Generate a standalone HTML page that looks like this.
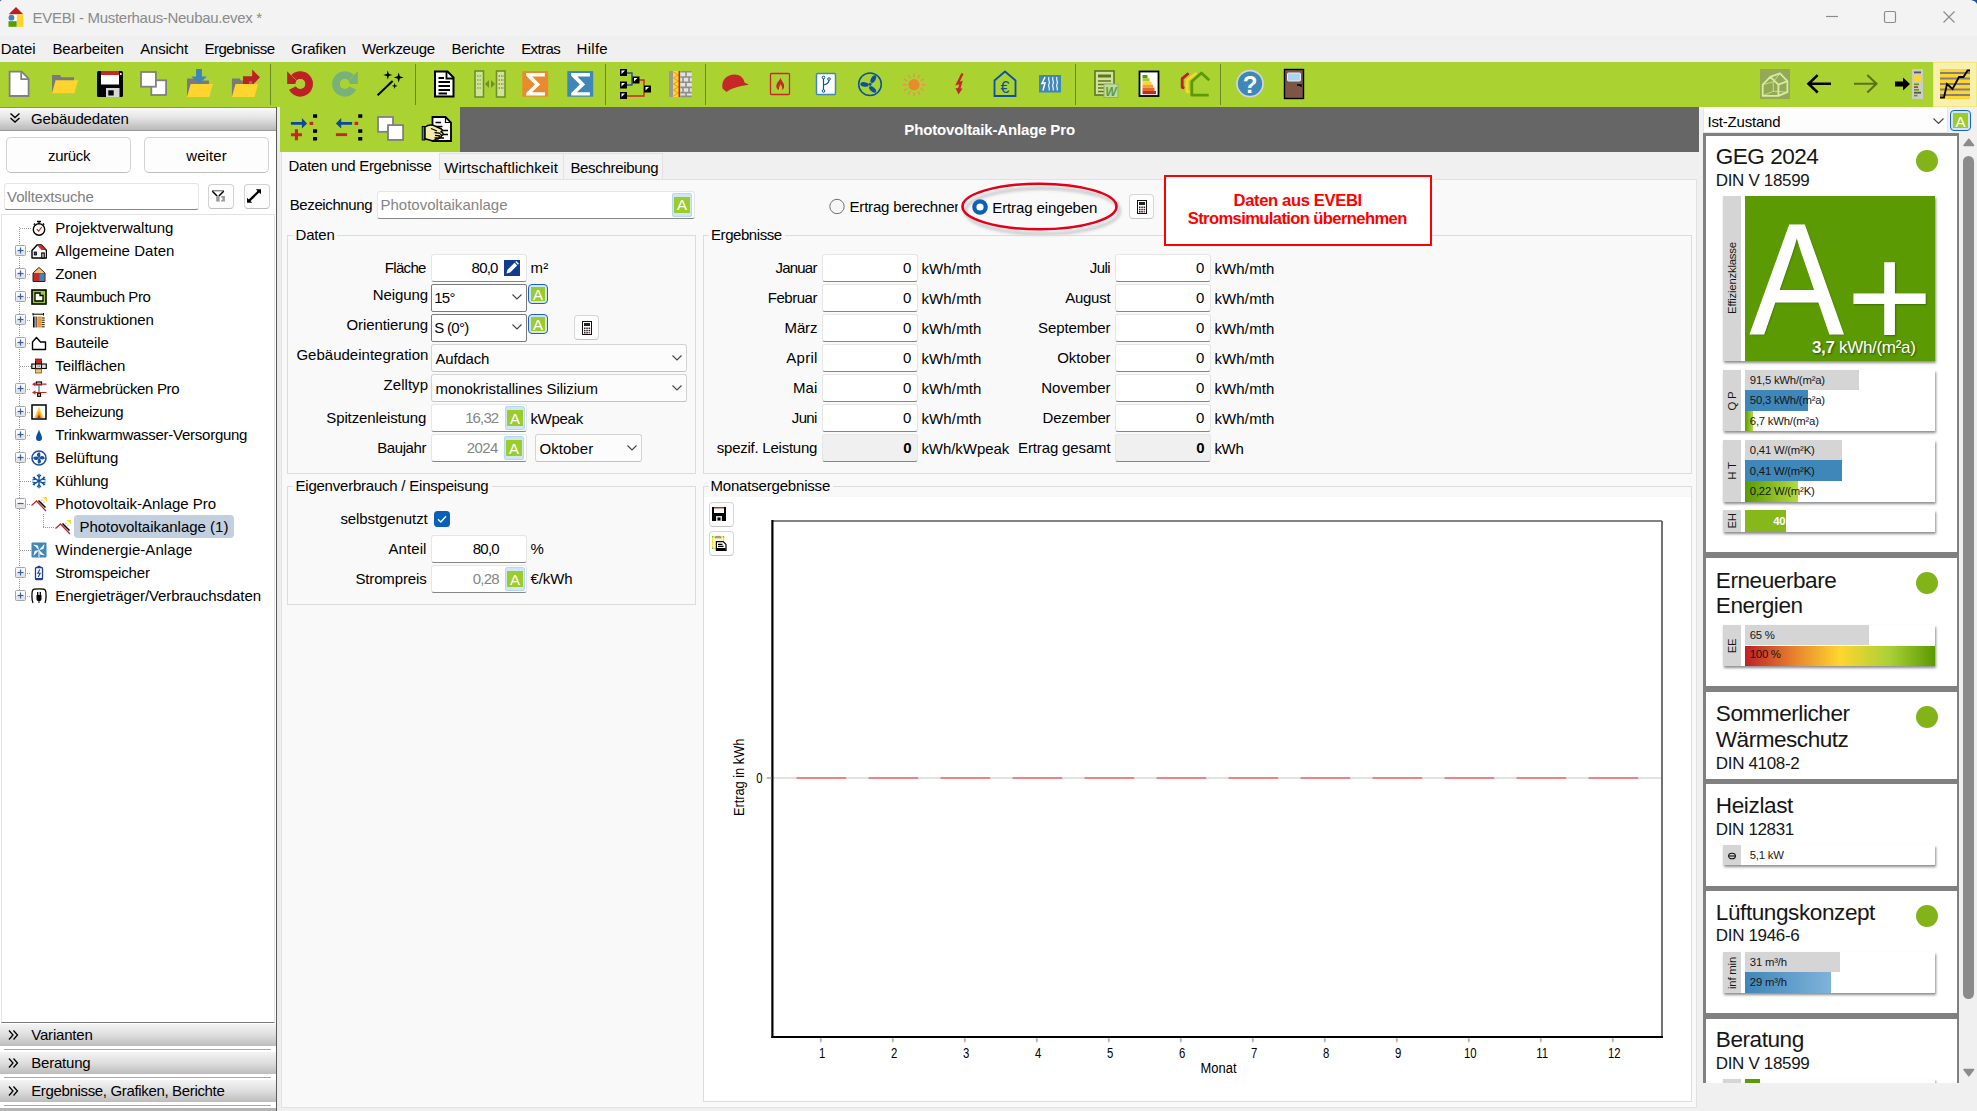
<!DOCTYPE html>
<html lang="de"><head><meta charset="utf-8"><title>EVEBI - Musterhaus-Neubau.evex *</title>
<style>
html,body{margin:0;padding:0;}
body{width:1977px;height:1111px;overflow:hidden;position:relative;background:#f0f0f0;font-family:"Liberation Sans",sans-serif;}
div,svg{position:absolute;}
.t{white-space:nowrap;line-height:normal;}
svg text{font-family:"Liberation Sans",sans-serif;}
</style></head><body>
<div style="left:0px;top:0px;width:1977px;height:36px;background:#f3f3f3;"></div>
<div style="left:0px;top:36px;width:1977px;height:26px;background:#f0f0f0;"></div>
<div class="t" style="top:9.00px;font-size:15px;color:#8a8a8a;letter-spacing:-0.312px;left:32.60px;">EVEBI - Musterhaus-Neubau.evex *</div>
<svg style="left:6px;top:5px;" width="20" height="24" viewBox="0 0 20 24">
      <rect x="2.5" y="9.4" width="8.4" height="6.8" fill="#fff"/>
      <polygon points="10,2 17.2,9.3 2.7,9.3" fill="#b82020"/>
      <circle cx="5.45" cy="12.7" r="2.9" fill="#3f86b9"/>
      <rect x="2.5" y="16.2" width="8.2" height="5.6" fill="#5b9a03"/>
      <rect x="10.9" y="9.4" width="6.5" height="12.4" fill="#ffd62c"/>
    </svg>
<svg style="left:0px;top:0px;" width="3" height="2" viewBox="0 0 3 2"><path d="M0 0 H2 Q0.5 0.3 0 1.5Z" fill="#1c4e9c"/></svg>
<svg style="left:1820px;top:5px;" width="150" height="24" viewBox="0 0 150 24">
      <line x1="6" y1="11.5" x2="18" y2="11.5" stroke="#8c8c8c" stroke-width="1.2"/>
      <rect x="64.5" y="6.5" width="11" height="11" rx="1.5" fill="none" stroke="#8c8c8c" stroke-width="1.2"/>
      <path d="M123.5 6.5 L134.5 17.5 M134.5 6.5 L123.5 17.5" stroke="#8c8c8c" stroke-width="1.2" fill="none"/>
    </svg>
<svg style="left:1969px;top:0px;" width="8" height="4" viewBox="0 0 8 4"><path d="M2 0 H8 V4 Q7 1 2 0Z" fill="#1c4e9c"/></svg>
<div class="t" style="top:40.00px;font-size:15px;color:#000;letter-spacing:-0.066px;left:0.80px;">Datei</div>
<div class="t" style="top:40.00px;font-size:15px;color:#000;letter-spacing:-0.146px;left:52.50px;">Bearbeiten</div>
<div class="t" style="top:40.00px;font-size:15px;color:#000;letter-spacing:-0.229px;left:140.30px;">Ansicht</div>
<div class="t" style="top:40.00px;font-size:15px;color:#000;letter-spacing:-0.495px;left:204.50px;">Ergebnisse</div>
<div class="t" style="top:40.00px;font-size:15px;color:#000;letter-spacing:-0.213px;left:291.00px;">Grafiken</div>
<div class="t" style="top:40.00px;font-size:15px;color:#000;letter-spacing:-0.299px;left:361.90px;">Werkzeuge</div>
<div class="t" style="top:40.00px;font-size:15px;color:#000;letter-spacing:-0.241px;left:451.50px;">Berichte</div>
<div class="t" style="top:40.00px;font-size:15px;color:#000;letter-spacing:-0.586px;left:521.20px;">Extras</div>
<div class="t" style="top:40.00px;font-size:15px;color:#000;letter-spacing:0.297px;left:576.50px;">Hilfe</div>
<div style="left:0px;top:62px;width:1977px;height:45px;background:#aad331;"></div>
<div style="left:1933px;top:62px;width:44px;height:45px;background:#f9f0ae;border:1px solid #f4e57f;box-sizing:border-box;"></div>
<div style="left:270px;top:64px;width:1px;height:41px;background:#6d8a22;"></div>
<div style="left:415px;top:64px;width:1px;height:41px;background:#6d8a22;"></div>
<div style="left:605px;top:64px;width:1px;height:41px;background:#6d8a22;"></div>
<div style="left:705px;top:64px;width:1px;height:41px;background:#6d8a22;"></div>
<div style="left:1075px;top:64px;width:1px;height:41px;background:#6d8a22;"></div>
<div style="left:1220px;top:64px;width:1px;height:41px;background:#6d8a22;"></div>
<div style="left:280px;top:107px;width:180px;height:45px;background:#aad331;"></div>
<div style="left:460px;top:107px;width:1239px;height:45px;background:#666666;"></div>
<div class="t" style="top:121.00px;font-size:15px;color:#fff;font-weight:bold;letter-spacing:-0.156px;left:989.62px;transform:translateX(-50%);">Photovoltaik-Anlage Pro</div>
<div style="left:0px;top:107px;width:276px;height:1004px;background:#fff;"></div>
<div style="left:276px;top:107px;width:1px;height:1004px;background:#5a5a5a;"></div>
<div style="left:277px;top:107px;width:3px;height:1004px;background:#ececec;"></div>
<div style="left:0px;top:107px;width:276px;height:24px;background:linear-gradient(#fafafa,#e4e4e4 45%,#b9b9b9);border-top:1px solid #8c8c8c;border-bottom:1px solid #9a9a9a;box-sizing:border-box;"></div>
<svg style="left:9px;top:112px;" width="12" height="12" viewBox="0 0 12 12"><path d="M1.5 1.5 L6 5.5 L10.5 1.5 M1.5 6 L6 10 L10.5 6" stroke="#000" stroke-width="1.4" fill="none"/></svg>
<div class="t" style="top:109.60px;font-size:15px;color:#000;letter-spacing:-0.13px;left:31.00px;">Gebäudedaten</div>
<div style="left:6px;top:137px;width:125px;height:36px;background:#fdfdfd;border:1px solid #d2d2d2;border-bottom-color:#bdbdbd;border-radius:5px;box-sizing:border-box;"></div>
<div class="t" style="top:146.50px;font-size:15px;color:#000;letter-spacing:-0.365px;left:69.12px;transform:translateX(-50%);">zurück</div>
<div style="left:144px;top:137px;width:125px;height:36px;background:#fdfdfd;border:1px solid #d2d2d2;border-bottom-color:#bdbdbd;border-radius:5px;box-sizing:border-box;"></div>
<div class="t" style="top:146.50px;font-size:15px;color:#000;letter-spacing:0.097px;left:206.55px;transform:translateX(-50%);">weiter</div>
<div style="left:4px;top:183px;width:195px;height:27px;background:#fff;border:1px solid #e6e6e6;border-bottom:1px solid #868686;border-radius:3px;box-sizing:border-box;"></div>
<div class="t" style="top:187.80px;font-size:15px;color:#808080;letter-spacing:-0.138px;left:7.10px;">Volltextsuche</div>
<div style="left:208px;top:184px;width:26px;height:25px;background:#fdfdfd;border:1px solid #d2d2d2;border-bottom-color:#bdbdbd;border-radius:4px;box-sizing:border-box;"></div>
<div style="left:244px;top:184px;width:26px;height:25px;background:#fdfdfd;border:1px solid #d2d2d2;border-bottom-color:#bdbdbd;border-radius:4px;box-sizing:border-box;"></div>
<svg style="left:208px;top:184px;" width="26" height="25" viewBox="0 0 26 25"><path d="M4 6.7 H16" stroke="#8a8a8a" stroke-width="1.4"/><path d="M4.3 7.2 L9.1 12.1 M15.7 7.2 L10.9 12.1" stroke="#000" stroke-width="1.5"/><rect x="8.2" y="12.1" width="3.4" height="5.5" fill="#9a9a9a"/><path d="M13.2 12.1 H16.9 V17.6 H13.2 V16 H14.4 V13.7 H13.2 Z" fill="#9a9a9a"/></svg>
<svg style="left:244px;top:184px;" width="26" height="25" viewBox="0 0 26 25"><path d="M4.5 17.3 L15.5 6.7" stroke="#000" stroke-width="2.3"/><path d="M11.8 5.2 H17 V10.2 Z" fill="#000"/><path d="M3 13.8 V18.8 H8.2 Z" fill="#000"/></svg>
<div style="left:1px;top:214px;width:274px;height:809px;background:#fff;border:1px solid #e3e3e3;border-bottom:1px solid #7a7a7a;box-sizing:border-box;"></div>
<div style="left:0px;top:1024px;width:276px;height:22px;background:linear-gradient(#f4f4f4,#dedede 50%,#bcbcbc);"></div>
<svg style="left:8px;top:1029px;" width="11" height="12" viewBox="0 0 11 12"><path d="M1 1.5 L5 6 L1 10.5 M5.5 1.5 L9.5 6 L5.5 10.5" stroke="#000" stroke-width="1.3" fill="none"/></svg>
<div class="t" style="top:1025.60px;font-size:15px;color:#000;letter-spacing:-0.179px;left:31.20px;">Varianten</div>
<div style="left:4px;top:1049px;width:267px;height:1px;background:#a8a8a8;"></div>
<div style="left:0px;top:1052px;width:276px;height:22px;background:linear-gradient(#f4f4f4,#dedede 50%,#bcbcbc);"></div>
<svg style="left:8px;top:1057px;" width="11" height="12" viewBox="0 0 11 12"><path d="M1 1.5 L5 6 L1 10.5 M5.5 1.5 L9.5 6 L5.5 10.5" stroke="#000" stroke-width="1.3" fill="none"/></svg>
<div class="t" style="top:1053.60px;font-size:15px;color:#000;letter-spacing:-0.199px;left:31.20px;">Beratung</div>
<div style="left:4px;top:1077px;width:267px;height:1px;background:#a8a8a8;"></div>
<div style="left:0px;top:1080px;width:276px;height:22px;background:linear-gradient(#f4f4f4,#dedede 50%,#bcbcbc);"></div>
<svg style="left:8px;top:1085px;" width="11" height="12" viewBox="0 0 11 12"><path d="M1 1.5 L5 6 L1 10.5 M5.5 1.5 L9.5 6 L5.5 10.5" stroke="#000" stroke-width="1.3" fill="none"/></svg>
<div class="t" style="top:1081.60px;font-size:15px;color:#000;letter-spacing:-0.341px;left:31.20px;">Ergebnisse, Grafiken, Berichte</div>
<div style="left:4px;top:1105px;width:267px;height:1px;background:#a8a8a8;"></div>
<div style="left:0px;top:1108px;width:276px;height:3px;background:#b4b4b4;"></div>
<div style="left:19px;top:227px;width:1px;height:369px;background-image:linear-gradient(#9a9a9a 50%,transparent 50%);background-size:1px 2px;"></div>
<div class="t" style="top:218.70px;font-size:15px;color:#000;letter-spacing:-0.073px;left:55.30px;">Projektverwaltung</div>
<div style="left:20px;top:228px;width:11px;height:1px;background-image:linear-gradient(90deg,#9a9a9a 50%,transparent 50%);background-size:2px 1px;"></div>
<div class="t" style="top:241.70px;font-size:15px;color:#000;letter-spacing:0.05px;left:55.30px;">Allgemeine Daten</div>
<div style="left:25px;top:251px;width:6px;height:1px;background-image:linear-gradient(90deg,#9a9a9a 50%,transparent 50%);background-size:2px 1px;"></div>
<svg style="left:15px;top:245px;" width="11" height="11" viewBox="0 0 11 11"><rect x="0.5" y="0.5" width="10" height="10" rx="1" fill="#fafafa" stroke="#a5a5a5"/><rect x="1" y="6" width="9" height="4" fill="#e4e4e4"/><path d="M2.5 5.5 H8.5" stroke="#3b5da5" stroke-width="1.2"/><path d="M5.5 2.5 V8.5" stroke="#3b5da5" stroke-width="1.2"/></svg>
<div class="t" style="top:264.70px;font-size:15px;color:#000;letter-spacing:-0.249px;left:55.30px;">Zonen</div>
<div style="left:25px;top:274px;width:6px;height:1px;background-image:linear-gradient(90deg,#9a9a9a 50%,transparent 50%);background-size:2px 1px;"></div>
<svg style="left:15px;top:268px;" width="11" height="11" viewBox="0 0 11 11"><rect x="0.5" y="0.5" width="10" height="10" rx="1" fill="#fafafa" stroke="#a5a5a5"/><rect x="1" y="6" width="9" height="4" fill="#e4e4e4"/><path d="M2.5 5.5 H8.5" stroke="#3b5da5" stroke-width="1.2"/><path d="M5.5 2.5 V8.5" stroke="#3b5da5" stroke-width="1.2"/></svg>
<div class="t" style="top:287.70px;font-size:15px;color:#000;letter-spacing:-0.405px;left:55.30px;">Raumbuch Pro</div>
<div style="left:25px;top:297px;width:6px;height:1px;background-image:linear-gradient(90deg,#9a9a9a 50%,transparent 50%);background-size:2px 1px;"></div>
<svg style="left:15px;top:291px;" width="11" height="11" viewBox="0 0 11 11"><rect x="0.5" y="0.5" width="10" height="10" rx="1" fill="#fafafa" stroke="#a5a5a5"/><rect x="1" y="6" width="9" height="4" fill="#e4e4e4"/><path d="M2.5 5.5 H8.5" stroke="#3b5da5" stroke-width="1.2"/><path d="M5.5 2.5 V8.5" stroke="#3b5da5" stroke-width="1.2"/></svg>
<div class="t" style="top:310.70px;font-size:15px;color:#000;letter-spacing:-0.12px;left:55.30px;">Konstruktionen</div>
<div style="left:25px;top:320px;width:6px;height:1px;background-image:linear-gradient(90deg,#9a9a9a 50%,transparent 50%);background-size:2px 1px;"></div>
<svg style="left:15px;top:314px;" width="11" height="11" viewBox="0 0 11 11"><rect x="0.5" y="0.5" width="10" height="10" rx="1" fill="#fafafa" stroke="#a5a5a5"/><rect x="1" y="6" width="9" height="4" fill="#e4e4e4"/><path d="M2.5 5.5 H8.5" stroke="#3b5da5" stroke-width="1.2"/><path d="M5.5 2.5 V8.5" stroke="#3b5da5" stroke-width="1.2"/></svg>
<div class="t" style="top:333.70px;font-size:15px;color:#000;letter-spacing:-0.102px;left:55.30px;">Bauteile</div>
<div style="left:25px;top:343px;width:6px;height:1px;background-image:linear-gradient(90deg,#9a9a9a 50%,transparent 50%);background-size:2px 1px;"></div>
<svg style="left:15px;top:337px;" width="11" height="11" viewBox="0 0 11 11"><rect x="0.5" y="0.5" width="10" height="10" rx="1" fill="#fafafa" stroke="#a5a5a5"/><rect x="1" y="6" width="9" height="4" fill="#e4e4e4"/><path d="M2.5 5.5 H8.5" stroke="#3b5da5" stroke-width="1.2"/><path d="M5.5 2.5 V8.5" stroke="#3b5da5" stroke-width="1.2"/></svg>
<div class="t" style="top:356.70px;font-size:15px;color:#000;letter-spacing:-0.072px;left:55.30px;">Teilflächen</div>
<div style="left:20px;top:366px;width:11px;height:1px;background-image:linear-gradient(90deg,#9a9a9a 50%,transparent 50%);background-size:2px 1px;"></div>
<div class="t" style="top:379.70px;font-size:15px;color:#000;letter-spacing:-0.326px;left:55.30px;">Wärmebrücken Pro</div>
<div style="left:25px;top:389px;width:6px;height:1px;background-image:linear-gradient(90deg,#9a9a9a 50%,transparent 50%);background-size:2px 1px;"></div>
<svg style="left:15px;top:383px;" width="11" height="11" viewBox="0 0 11 11"><rect x="0.5" y="0.5" width="10" height="10" rx="1" fill="#fafafa" stroke="#a5a5a5"/><rect x="1" y="6" width="9" height="4" fill="#e4e4e4"/><path d="M2.5 5.5 H8.5" stroke="#3b5da5" stroke-width="1.2"/><path d="M5.5 2.5 V8.5" stroke="#3b5da5" stroke-width="1.2"/></svg>
<div class="t" style="top:402.70px;font-size:15px;color:#000;letter-spacing:-0.334px;left:55.30px;">Beheizung</div>
<div style="left:25px;top:412px;width:6px;height:1px;background-image:linear-gradient(90deg,#9a9a9a 50%,transparent 50%);background-size:2px 1px;"></div>
<svg style="left:15px;top:406px;" width="11" height="11" viewBox="0 0 11 11"><rect x="0.5" y="0.5" width="10" height="10" rx="1" fill="#fafafa" stroke="#a5a5a5"/><rect x="1" y="6" width="9" height="4" fill="#e4e4e4"/><path d="M2.5 5.5 H8.5" stroke="#3b5da5" stroke-width="1.2"/><path d="M5.5 2.5 V8.5" stroke="#3b5da5" stroke-width="1.2"/></svg>
<div class="t" style="top:425.70px;font-size:15px;color:#000;letter-spacing:-0.26px;left:55.30px;">Trinkwarmwasser-Versorgung</div>
<div style="left:25px;top:435px;width:6px;height:1px;background-image:linear-gradient(90deg,#9a9a9a 50%,transparent 50%);background-size:2px 1px;"></div>
<svg style="left:15px;top:429px;" width="11" height="11" viewBox="0 0 11 11"><rect x="0.5" y="0.5" width="10" height="10" rx="1" fill="#fafafa" stroke="#a5a5a5"/><rect x="1" y="6" width="9" height="4" fill="#e4e4e4"/><path d="M2.5 5.5 H8.5" stroke="#3b5da5" stroke-width="1.2"/><path d="M5.5 2.5 V8.5" stroke="#3b5da5" stroke-width="1.2"/></svg>
<div class="t" style="top:448.70px;font-size:15px;color:#000;letter-spacing:-0.043px;left:55.30px;">Belüftung</div>
<div style="left:25px;top:458px;width:6px;height:1px;background-image:linear-gradient(90deg,#9a9a9a 50%,transparent 50%);background-size:2px 1px;"></div>
<svg style="left:15px;top:452px;" width="11" height="11" viewBox="0 0 11 11"><rect x="0.5" y="0.5" width="10" height="10" rx="1" fill="#fafafa" stroke="#a5a5a5"/><rect x="1" y="6" width="9" height="4" fill="#e4e4e4"/><path d="M2.5 5.5 H8.5" stroke="#3b5da5" stroke-width="1.2"/><path d="M5.5 2.5 V8.5" stroke="#3b5da5" stroke-width="1.2"/></svg>
<div class="t" style="top:471.70px;font-size:15px;color:#000;letter-spacing:-0.28px;left:55.30px;">Kühlung</div>
<div style="left:20px;top:481px;width:11px;height:1px;background-image:linear-gradient(90deg,#9a9a9a 50%,transparent 50%);background-size:2px 1px;"></div>
<div class="t" style="top:494.70px;font-size:15px;color:#000;letter-spacing:-0.002px;left:55.30px;">Photovoltaik-Anlage Pro</div>
<div style="left:25px;top:504px;width:6px;height:1px;background-image:linear-gradient(90deg,#9a9a9a 50%,transparent 50%);background-size:2px 1px;"></div>
<svg style="left:15px;top:498px;" width="11" height="11" viewBox="0 0 11 11"><rect x="0.5" y="0.5" width="10" height="10" rx="1" fill="#fafafa" stroke="#a5a5a5"/><rect x="1" y="6" width="9" height="4" fill="#e4e4e4"/><path d="M2.5 5.5 H8.5" stroke="#3b5da5" stroke-width="1.2"/></svg>
<div style="left:74px;top:515px;width:160px;height:23px;background:#c1cfdf;border-radius:4px;"></div>
<div class="t" style="top:517.70px;font-size:15px;color:#000;letter-spacing:-0.012px;left:79.40px;">Photovoltaikanlage (1)</div>
<div style="left:43px;top:514px;width:1px;height:14px;background-image:linear-gradient(#9a9a9a 50%,transparent 50%);background-size:1px 2px;"></div>
<div style="left:43px;top:527px;width:12px;height:1px;background-image:linear-gradient(90deg,#9a9a9a 50%,transparent 50%);background-size:2px 1px;"></div>
<div class="t" style="top:540.70px;font-size:15px;color:#000;letter-spacing:0.071px;left:55.30px;">Windenergie-Anlage</div>
<div style="left:20px;top:550px;width:11px;height:1px;background-image:linear-gradient(90deg,#9a9a9a 50%,transparent 50%);background-size:2px 1px;"></div>
<div class="t" style="top:563.70px;font-size:15px;color:#000;letter-spacing:-0.177px;left:55.30px;">Stromspeicher</div>
<div style="left:25px;top:573px;width:6px;height:1px;background-image:linear-gradient(90deg,#9a9a9a 50%,transparent 50%);background-size:2px 1px;"></div>
<svg style="left:15px;top:567px;" width="11" height="11" viewBox="0 0 11 11"><rect x="0.5" y="0.5" width="10" height="10" rx="1" fill="#fafafa" stroke="#a5a5a5"/><rect x="1" y="6" width="9" height="4" fill="#e4e4e4"/><path d="M2.5 5.5 H8.5" stroke="#3b5da5" stroke-width="1.2"/><path d="M5.5 2.5 V8.5" stroke="#3b5da5" stroke-width="1.2"/></svg>
<div class="t" style="top:586.70px;font-size:15px;color:#000;letter-spacing:-0.099px;left:55.30px;">Energieträger/Verbrauchsdaten</div>
<div style="left:25px;top:596px;width:6px;height:1px;background-image:linear-gradient(90deg,#9a9a9a 50%,transparent 50%);background-size:2px 1px;"></div>
<svg style="left:15px;top:590px;" width="11" height="11" viewBox="0 0 11 11"><rect x="0.5" y="0.5" width="10" height="10" rx="1" fill="#fafafa" stroke="#a5a5a5"/><rect x="1" y="6" width="9" height="4" fill="#e4e4e4"/><path d="M2.5 5.5 H8.5" stroke="#3b5da5" stroke-width="1.2"/><path d="M5.5 2.5 V8.5" stroke="#3b5da5" stroke-width="1.2"/></svg>
<svg style="left:31px;top:220px;" width="16" height="16" viewBox="0 0 16 16"><circle cx="8" cy="9.5" r="5.7" fill="#fff" stroke="#000" stroke-width="1.4"/><path d="M6 1.5 H10 M8 1.5 V3.5 M12 3.5 L13.2 4.7 M4 3.5 L2.8 4.7" stroke="#000" stroke-width="1.3"/><path d="M5.8 9.2 L7.6 11 L10.8 7" stroke="#c62828" stroke-width="1.2" fill="none"/></svg>
<svg style="left:31px;top:243px;" width="16" height="16" viewBox="0 0 16 16"><path d="M1 15 V7.5 L6 2 H10.5 L15.5 7.5 V15 Z" fill="#fff" stroke="#000" stroke-width="1.4" stroke-linejoin="round"/><path d="M6 2 H10.5 L15 7 H10.5 Z" fill="#d8232a"/><rect x="3.2" y="9" width="2.2" height="3" fill="#1f4fa8" stroke="#000" stroke-width="0.8"/><rect x="10.8" y="10" width="2.4" height="5" fill="#fff" stroke="#000" stroke-width="1.2"/></svg>
<svg style="left:31px;top:266px;" width="16" height="16" viewBox="0 0 16 16"><path d="M2 15.5 V7 L8 1.5 L14 7 V15.5 Z" fill="#c62828" stroke="#222" stroke-width="1"/><path d="M2.5 7 L8 2 L13.5 7 Z" fill="#f2c078"/><rect x="8.5" y="7.5" width="5" height="7.5" fill="#3f86b9"/></svg>
<svg style="left:31px;top:289px;" width="16" height="16" viewBox="0 0 16 16"><rect x="1" y="1" width="14" height="14" fill="#9ccb2c" stroke="#000" stroke-width="1.6"/><path d="M4 4 H9 V6.5 H12 V12 H4 Z" fill="#fff" stroke="#000" stroke-width="1.3"/></svg>
<svg style="left:31px;top:312px;" width="16" height="16" viewBox="0 0 16 16"><path d="M2 1 V3.5 M12.5 1 V3.5 M2 2.2 H12.5" stroke="#000" stroke-width="1"/><rect x="2" y="4.5" width="1.6" height="11" fill="#000"/><rect x="4.6" y="4.5" width="1" height="11" fill="#000"/><rect x="6.2" y="4.5" width="4.5" height="11" fill="#f0973a"/><rect x="10.7" y="4.5" width="3" height="11" fill="#fff3b8"/><path d="M10.7 6 H13.7 M10.7 8.2 H13.7 M10.7 10.4 H13.7 M10.7 12.6 H13.7 M10.7 14.8 H13.7" stroke="#000" stroke-width="0.9"/></svg>
<svg style="left:31px;top:335px;" width="16" height="16" viewBox="0 0 16 16"><path d="M1.5 14.5 V7 L5.5 2.5 L9.5 7 H14.5 V14.5 Z" fill="#fff" stroke="#000" stroke-width="1.4" stroke-linejoin="round"/></svg>
<svg style="left:31px;top:358px;" width="16" height="16" viewBox="0 0 16 16"><rect x="4.5" y="1" width="6" height="4.5" fill="#c62828" stroke="#7a1010" stroke-width="0.8"/><rect x="0.8" y="6" width="14.5" height="4.5" fill="#ddd" stroke="#000" stroke-width="1.1"/><path d="M4.5 6 V10.5 M10.5 6 V10.5 M4.5 3 V6 M10.5 3 V6" stroke="#000" stroke-width="1"/><rect x="4.5" y="11" width="6" height="4" fill="#f2c078" stroke="#7a5a10" stroke-width="0.8"/><path d="M6.5 8.2 H9" stroke="#3f86b9" stroke-width="1.2" stroke-dasharray="1 0.7"/></svg>
<svg style="left:31px;top:381px;" width="16" height="16" viewBox="0 0 16 16"><rect x="5.5" y="1" width="5" height="2.8" fill="#fff" stroke="#000" stroke-width="1.2"/><rect x="6.7" y="12.5" width="2.8" height="2.8" fill="#fff3b8" stroke="#000" stroke-width="1.2"/><path d="M8 3.8 V12.5" stroke="#3f86b9" stroke-width="1.4"/><path d="M4 3.2 H15.5 M4 11.5 H15.5" stroke="#c62828" stroke-width="1.2"/><path d="M1 3.2 L4.5 1 V5.4 Z M1 11.5 L4.5 9.3 V13.7 Z" fill="#c62828"/></svg>
<svg style="left:31px;top:404px;" width="16" height="16" viewBox="0 0 16 16"><rect x="1" y="1" width="14" height="14" fill="#fff" stroke="#000" stroke-width="1.5"/><path d="M8 3 L13 14 H3 Z" fill="#ffd42e"/><path d="M8 7 L11.2 14 H4.8 Z" fill="#f0973a"/><path d="M8 10.5 L9.8 14 H6.2 Z" fill="#c62828"/></svg>
<svg style="left:31px;top:427px;" width="16" height="16" viewBox="0 0 16 16"><path d="M8 2.5 C9 6 11 8 11 11 A3 3 0 0 1 5 11 C5 8 7 6 8 2.5 Z" fill="#0c50a5"/></svg>
<svg style="left:31px;top:450px;" width="16" height="16" viewBox="0 0 16 16"><circle cx="8" cy="8" r="7" fill="#fff" stroke="#1c4fa0" stroke-width="1.6"/><g fill="#1c4fa0"><path d="M8 8 C5 6 5.5 2.5 8.5 2.2 C10 4 9.5 6.5 8 8Z"/><path d="M8 8 C10 5 13.5 5.5 13.8 8.5 C12 10 9.5 9.5 8 8Z"/><path d="M8 8 C11 10 10.5 13.5 7.5 13.8 C6 12 6.5 9.5 8 8Z"/><path d="M8 8 C6 11 2.5 10.5 2.2 7.5 C4 6 6.5 6.5 8 8Z"/></g></svg>
<svg style="left:31px;top:473px;" width="16" height="16" viewBox="0 0 16 16"><path d="M8 0.8 V15.2 M1.8 4.4 L14.2 11.6 M14.2 4.4 L1.8 11.6" stroke="#0c50a5" stroke-width="1.3"/><path d="M6 2 L8 4 L10 2 M6 14 L8 12 L10 14 M1.3 7 L4 6.3 L3.2 3.6 M14.7 7 L12 6.3 L12.8 3.6 M1.3 9 L4 9.7 L3.2 12.4 M14.7 9 L12 9.7 L12.8 12.4" stroke="#0c50a5" stroke-width="1.1" fill="none"/></svg>
<svg style="left:31px;top:496px;" width="16" height="16" viewBox="0 0 16 16"><path d="M0.5 9.5 L5.5 5 L15 15" stroke="#c62828" stroke-width="1.3" fill="none"/><path d="M7.5 4.5 L14.5 11.5" stroke="#000" stroke-width="1.5"/><path d="M11.5 1 H16 V5.5 Z" fill="#ffd42e"/><path d="M11.5 3.5 L10 5 M13.5 5.5 L12.5 7" stroke="#ffd42e" stroke-width="1.2"/></svg>
<svg style="left:55px;top:519px;" width="16" height="16" viewBox="0 0 16 16"><path d="M0.5 9.5 L5.5 5 L15 15" stroke="#c62828" stroke-width="1.3" fill="none"/><path d="M7.5 4.5 L14.5 11.5" stroke="#000" stroke-width="1.5"/><path d="M11.5 1 H16 V5.5 Z" fill="#ffd42e"/><path d="M11.5 3.5 L10 5 M13.5 5.5 L12.5 7" stroke="#ffd42e" stroke-width="1.2"/></svg>
<svg style="left:31px;top:542px;" width="16" height="16" viewBox="0 0 16 16"><rect x="0.5" y="0.5" width="15" height="15" rx="1" fill="#3f86b9"/><g fill="#fff"><path d="M8 8 L2 2.5 L7 3.5 Z"/><path d="M8 8 L13.5 2 L12.5 7 Z"/><path d="M8 8 L14 13.5 L9 12.5 Z"/><path d="M8 8 L2.5 14 L3.5 9 Z"/></g><path d="M8 8 V15" stroke="#fff" stroke-width="1"/></svg>
<svg style="left:31px;top:565px;" width="16" height="16" viewBox="0 0 16 16"><rect x="4.5" y="2.5" width="7" height="12" rx="1" fill="#fff" stroke="#1f3fa0" stroke-width="1.3"/><rect x="6.5" y="0.8" width="3" height="1.7" fill="#1f3fa0"/><rect x="4.5" y="13" width="7" height="2" fill="#1f3fa0"/><path d="M8.8 4.5 L6.8 8.3 H9.2 L7.2 12" stroke="#1f3fa0" stroke-width="1.1" fill="none"/></svg>
<svg style="left:31px;top:588px;" width="16" height="16" viewBox="0 0 16 16"><path d="M2 15 C0.5 12 0.8 4 1.5 2.5 C2 1 3 0.8 8 0.8 C13 0.8 14 1 14.5 2.5 C15.2 4 15.5 12 14 15" fill="#fff" stroke="#000" stroke-width="1.3"/><path d="M5.5 7 H10.5 V11 C10.5 12.5 9.5 13 8.5 13 V15 H7.5 V13 C6.5 13 5.5 12.5 5.5 11 Z" fill="#000"/><path d="M6.7 4 V7 M9.3 4 V7" stroke="#000" stroke-width="1.3"/></svg>
<div style="left:280px;top:152px;width:1419px;height:959px;background:#f0f0f0;"></div>
<div style="left:281px;top:179px;width:1416px;height:929px;background:#f9f9f9;border:1px solid #e2e2e2;box-sizing:border-box;"></div>
<div style="left:281px;top:152px;width:158px;height:28px;background:#f9f9f9;border-left:1px solid #e2e2e2;"></div>
<div class="t" style="top:156.50px;font-size:15px;color:#000;letter-spacing:-0.272px;left:288.50px;">Daten und Ergebnisse</div>
<div style="left:439px;top:153px;width:125px;height:27px;background:#f3f3f3;border:1px solid #e2e2e2;box-sizing:border-box;"></div>
<div class="t" style="top:158.50px;font-size:15px;color:#000;letter-spacing:0.065px;left:444.20px;">Wirtschaftlichkeit</div>
<div style="left:563px;top:153px;width:100px;height:27px;background:#f3f3f3;border:1px solid #e2e2e2;box-sizing:border-box;"></div>
<div class="t" style="top:158.50px;font-size:15px;color:#000;letter-spacing:-0.311px;left:570.40px;">Beschreibung</div>
<div class="t" style="top:196.00px;font-size:15px;color:#000;letter-spacing:-0.385px;left:289.70px;">Bezeichnung</div>
<div style="left:377px;top:191px;width:318px;height:27.5px;background:#fff;border:1px solid #e6e6e6;border-bottom:1px solid #868686;border-radius:3px;box-sizing:border-box;"></div>
<div class="t" style="top:196.00px;font-size:15px;color:#858585;letter-spacing:0.024px;left:380.40px;">Photovoltaikanlage</div>
<div style="left:672px;top:193px;width:20px;height:23.5px;background:#cfe6f7;border:1px solid #b5d8f3;border-radius:2px;box-sizing:border-box;"></div>
<div style="left:674px;top:197px;width:16px;height:15.5px;background:#9ccb2c;"></div>
<div class="t" style="top:196.25px;font-size:15px;color:#fff;left:682.00px;transform:translateX(-50%);">A</div>
<div style="left:287px;top:235px;width:409px;height:239px;border:1px solid #dcdcdc;box-sizing:border-box;"></div>
<div style="left:293px;top:227px;width:44px;height:16px;background:#f9f9f9;"></div>
<div class="t" style="top:225.60px;font-size:15px;color:#000;letter-spacing:-0.166px;left:295.50px;">Daten</div>
<div class="t" style="top:258.50px;font-size:15px;color:#000;letter-spacing:-0.672px;right:1551.27px;">Fläche</div>
<div style="left:431px;top:254px;width:96px;height:28px;background:#fff;border:1px solid #e6e6e6;border-bottom:1px solid #868686;border-radius:3px;box-sizing:border-box;"></div>
<div class="t" style="top:258.50px;font-size:15px;color:#000;letter-spacing:-0.801px;right:1479.40px;">80,0</div>
<svg style="left:504px;top:260px;" width="16" height="16" viewBox="0 0 16 16"><rect width="16" height="16" fill="#0f3c91"/><path d="M2.5 13.5 L3.5 9.8 L10.5 2.8 L13.2 5.5 L6.2 12.5 Z" fill="#fff"/><path d="M11.3 2 L12.3 1 L15 3.7 L14 4.7Z" fill="#fff"/></svg>
<div class="t" style="top:259.00px;font-size:15px;color:#000;letter-spacing:0.25px;left:530.50px;">m²</div>
<div class="t" style="top:286.00px;font-size:15px;color:#000;letter-spacing:-0.099px;right:1549.10px;">Neigung</div>
<div style="left:431px;top:284px;width:95.5px;height:27.5px;background:#fff;border:1px solid #7a7a7a;border-radius:2px;box-sizing:border-box;"></div>
<div class="t" style="top:289.00px;font-size:15px;color:#000;letter-spacing:-0.663px;left:434.20px;">15°</div>
<svg style="left:510.5px;top:293px;" width="12" height="8" viewBox="0 0 12 8"><path d="M1.5 1.5 L6 6 L10.5 1.5" stroke="#444" stroke-width="1.1" fill="none"/></svg>
<div style="left:528px;top:284px;width:20px;height:20px;background:#cfe6f7;border:1.5px solid #1e62b4;border-radius:4px;box-sizing:border-box;"></div>
<div style="left:531px;top:287px;width:14px;height:14px;background:#9ccb2c;"></div>
<div class="t" style="top:286.30px;font-size:15px;color:#fff;left:538.00px;transform:translateX(-50%);">A</div>
<div class="t" style="top:316.00px;font-size:15px;color:#000;letter-spacing:-0.087px;right:1549.09px;">Orientierung</div>
<div style="left:431px;top:314px;width:95.5px;height:27.5px;background:#fff;border:1px solid #7a7a7a;border-radius:2px;box-sizing:border-box;"></div>
<div class="t" style="top:319.00px;font-size:15px;color:#000;letter-spacing:-0.669px;left:434.20px;">S (0°)</div>
<svg style="left:510.5px;top:323px;" width="12" height="8" viewBox="0 0 12 8"><path d="M1.5 1.5 L6 6 L10.5 1.5" stroke="#444" stroke-width="1.1" fill="none"/></svg>
<div style="left:528px;top:314px;width:20px;height:20px;background:#cfe6f7;border:1.5px solid #1e62b4;border-radius:4px;box-sizing:border-box;"></div>
<div style="left:531px;top:317px;width:14px;height:14px;background:#9ccb2c;"></div>
<div class="t" style="top:316.30px;font-size:15px;color:#fff;left:538.00px;transform:translateX(-50%);">A</div>
<div style="left:574px;top:315px;width:25px;height:25px;background:#fdfdfd;border:1px solid #d6d6d6;border-bottom-color:#c4c4c4;border-radius:4px;box-sizing:border-box;"></div>
<svg style="left:582px;top:321px;" width="10" height="14" viewBox="0 0 10 14"><rect x="0.5" y="0.5" width="9" height="13" fill="#fff" stroke="#111"/>
      <rect x="2" y="2" width="6" height="3" fill="#222"/>
      <g fill="#222"><rect x="2" y="6.5" width="1.5" height="1.5"/><rect x="4.3" y="6.5" width="1.5" height="1.5"/><rect x="6.6" y="6.5" width="1.5" height="1.5"/>
      <rect x="2" y="8.8" width="1.5" height="1.5"/><rect x="4.3" y="8.8" width="1.5" height="1.5"/><rect x="6.6" y="8.8" width="1.5" height="1.5"/>
      <rect x="2" y="11" width="1.5" height="1.5"/><rect x="4.3" y="11" width="1.5" height="1.5"/></g><rect x="6.6" y="11" width="1.5" height="1.5" fill="#d22"/></svg>
<div class="t" style="top:345.50px;font-size:15px;color:#000;letter-spacing:0.012px;right:1548.59px;">Gebäudeintegration</div>
<div style="left:431px;top:344px;width:255.5px;height:28px;background:#fcfcfc;border:1px solid #d4d4d4;border-bottom-color:#c2c2c2;border-radius:3px;box-sizing:border-box;"></div>
<div class="t" style="top:349.70px;font-size:15px;color:#000;letter-spacing:-0.192px;left:435.50px;">Aufdach</div>
<svg style="left:670.5px;top:354px;" width="12" height="8" viewBox="0 0 12 8"><path d="M1.5 1.5 L6 6 L10.5 1.5" stroke="#444" stroke-width="1.1" fill="none"/></svg>
<div class="t" style="top:375.50px;font-size:15px;color:#000;letter-spacing:0.045px;right:1548.95px;">Zelltyp</div>
<div style="left:431px;top:374px;width:255.5px;height:28px;background:#fcfcfc;border:1px solid #d4d4d4;border-bottom-color:#c2c2c2;border-radius:3px;box-sizing:border-box;"></div>
<div class="t" style="top:379.70px;font-size:15px;color:#000;letter-spacing:-0.04px;left:435.50px;">monokristallines Silizium</div>
<svg style="left:670.5px;top:384px;" width="12" height="8" viewBox="0 0 12 8"><path d="M1.5 1.5 L6 6 L10.5 1.5" stroke="#444" stroke-width="1.1" fill="none"/></svg>
<div class="t" style="top:409.00px;font-size:15px;color:#000;letter-spacing:-0.116px;right:1550.72px;">Spitzenleistung</div>
<div style="left:431px;top:404px;width:96px;height:28px;background:#fff;border:1px solid #e6e6e6;border-bottom:1px solid #868686;border-radius:3px;box-sizing:border-box;"></div>
<div class="t" style="top:409.00px;font-size:15px;color:#858585;letter-spacing:-0.869px;right:1478.67px;">16,32</div>
<div style="left:505px;top:406px;width:20px;height:24px;background:#cfe6f7;border:1px solid #b5d8f3;border-radius:2px;box-sizing:border-box;"></div>
<div style="left:507px;top:410px;width:16px;height:16px;background:#9ccb2c;"></div>
<div class="t" style="top:409.50px;font-size:15px;color:#fff;left:515.00px;transform:translateX(-50%);">A</div>
<div class="t" style="top:409.50px;font-size:15px;color:#000;letter-spacing:-0.281px;left:530.40px;">kWpeak</div>
<div class="t" style="top:439.00px;font-size:15px;color:#000;letter-spacing:-0.429px;right:1551.03px;">Baujahr</div>
<div style="left:431px;top:434px;width:96px;height:28px;background:#fff;border:1px solid #e6e6e6;border-bottom:1px solid #868686;border-radius:3px;box-sizing:border-box;"></div>
<div class="t" style="top:439.00px;font-size:15px;color:#858585;letter-spacing:-0.594px;right:1479.19px;">2024</div>
<div style="left:504px;top:436px;width:20px;height:24px;background:#cfe6f7;border:1px solid #b5d8f3;border-radius:2px;box-sizing:border-box;"></div>
<div style="left:506px;top:440px;width:16px;height:16px;background:#9ccb2c;"></div>
<div class="t" style="top:439.50px;font-size:15px;color:#fff;left:514.00px;transform:translateX(-50%);">A</div>
<div style="left:535px;top:434px;width:106.5px;height:28px;background:#fcfcfc;border:1px solid #d4d4d4;border-bottom-color:#c2c2c2;border-radius:3px;box-sizing:border-box;"></div>
<div class="t" style="top:439.70px;font-size:15px;color:#000;letter-spacing:0.049px;left:539.50px;">Oktober</div>
<svg style="left:625.5px;top:444px;" width="12" height="8" viewBox="0 0 12 8"><path d="M1.5 1.5 L6 6 L10.5 1.5" stroke="#444" stroke-width="1.1" fill="none"/></svg>
<div style="left:287px;top:485.5px;width:409px;height:119px;border:1px solid #dcdcdc;box-sizing:border-box;"></div>
<div style="left:293px;top:477.5px;width:199px;height:16px;background:#f9f9f9;"></div>
<div class="t" style="top:476.50px;font-size:15px;color:#000;letter-spacing:-0.225px;left:295.50px;">Eigenverbrauch / Einspeisung</div>
<div class="t" style="top:510.30px;font-size:15px;color:#000;letter-spacing:-0.092px;right:1549.39px;">selbstgenutzt</div>
<div style="left:434px;top:511px;width:16px;height:16px;background:#0a5fb9;border-radius:3.5px;"></div>
<svg style="left:434px;top:511px;" width="16" height="16" viewBox="0 0 16 16"><path d="M4 8.3 L6.8 11 L12 5.3" stroke="#fff" stroke-width="1.3" fill="none"/></svg>
<div class="t" style="top:539.80px;font-size:15px;color:#000;letter-spacing:0.078px;right:1550.52px;">Anteil</div>
<div style="left:431px;top:535px;width:96px;height:28px;background:#fff;border:1px solid #e6e6e6;border-bottom:1px solid #868686;border-radius:3px;box-sizing:border-box;"></div>
<div class="t" style="top:539.80px;font-size:15px;color:#000;letter-spacing:-0.751px;right:1478.05px;">80,0</div>
<div class="t" style="top:540.30px;font-size:15px;color:#000;letter-spacing:-2.144px;left:530.40px;">%</div>
<div class="t" style="top:569.80px;font-size:15px;color:#000;letter-spacing:-0.133px;right:1550.43px;">Strompreis</div>
<div style="left:431px;top:565px;width:96px;height:28px;background:#fff;border:1px solid #e6e6e6;border-bottom:1px solid #868686;border-radius:3px;box-sizing:border-box;"></div>
<div class="t" style="top:569.80px;font-size:15px;color:#858585;letter-spacing:-0.751px;right:1478.05px;">0,28</div>
<div style="left:505px;top:567px;width:20px;height:24px;background:#cfe6f7;border:1px solid #b5d8f3;border-radius:2px;box-sizing:border-box;"></div>
<div style="left:507px;top:571px;width:16px;height:16px;background:#9ccb2c;"></div>
<div class="t" style="top:570.50px;font-size:15px;color:#fff;left:515.00px;transform:translateX(-50%);">A</div>
<div class="t" style="top:570.30px;font-size:15px;color:#000;letter-spacing:-0.063px;left:530.40px;">€/kWh</div>
<svg style="left:828px;top:198px;" width="18" height="18" viewBox="0 0 18 18"><circle cx="9" cy="8.5" r="7.2" fill="#f6f6f6" stroke="#6f6f6f" stroke-width="1"/></svg>
<div class="t" style="left:849.5px;top:198px;width:108.5px;overflow:hidden;font-size:15px;letter-spacing:-0.182px;">Ertrag berechnen</div>
<svg style="left:971px;top:198px;" width="18" height="18" viewBox="0 0 18 18"><circle cx="9" cy="9" r="7.8" fill="#0a5fb9"/><circle cx="9" cy="9" r="3.6" fill="#fff"/></svg>
<div class="t" style="top:199.00px;font-size:15px;color:#000;letter-spacing:-0.117px;left:992.30px;">Ertrag eingeben</div>
<svg style="left:951px;top:175px;" width="180" height="66" viewBox="0 0 180 66"><ellipse cx="90" cy="33.5" rx="77" ry="22.8" fill="none" stroke="#8a8a8a" stroke-opacity="0.45" stroke-width="3" transform="translate(1.5,2.5)" style="filter:blur(1.5px)"/><ellipse cx="88.5" cy="31.5" rx="77" ry="22.8" fill="none" stroke="#e3001b" stroke-width="2.6"/></svg>
<div style="left:1129px;top:194px;width:25px;height:25px;background:#fdfdfd;border:1px solid #d6d6d6;border-bottom-color:#c4c4c4;border-radius:4px;box-sizing:border-box;"></div>
<svg style="left:1137px;top:200px;" width="10" height="14" viewBox="0 0 10 14"><rect x="0.5" y="0.5" width="9" height="13" fill="#fff" stroke="#111"/>
      <rect x="2" y="2" width="6" height="3" fill="#222"/>
      <g fill="#222"><rect x="2" y="6.5" width="1.5" height="1.5"/><rect x="4.3" y="6.5" width="1.5" height="1.5"/><rect x="6.6" y="6.5" width="1.5" height="1.5"/>
      <rect x="2" y="8.8" width="1.5" height="1.5"/><rect x="4.3" y="8.8" width="1.5" height="1.5"/><rect x="6.6" y="8.8" width="1.5" height="1.5"/>
      <rect x="2" y="11" width="1.5" height="1.5"/><rect x="4.3" y="11" width="1.5" height="1.5"/></g><rect x="6.6" y="11" width="1.5" height="1.5" fill="#d22"/></svg>
<div style="left:1164.3px;top:174.5px;width:267.7px;height:71px;background:#fff;border:2.2px solid #ff0000;box-sizing:border-box;"></div>
<div class="t" style="top:190.80px;font-size:16.6px;color:#ff0000;font-weight:bold;letter-spacing:-0.368px;left:1297.72px;transform:translateX(-50%);">Daten aus EVEBI</div>
<div class="t" style="top:208.80px;font-size:16.6px;color:#ff0000;font-weight:bold;letter-spacing:-0.62px;left:1297.19px;transform:translateX(-50%);">Stromsimulation übernehmen</div>
<div style="left:702.5px;top:234.5px;width:989.5px;height:239px;border:1px solid #dcdcdc;box-sizing:border-box;"></div>
<div style="left:708.5px;top:226.5px;width:76px;height:16px;background:#f9f9f9;"></div>
<div class="t" style="top:226.00px;font-size:15px;color:#000;letter-spacing:-0.435px;left:711.00px;">Ergebnisse</div>
<div style="left:1164.3px;top:174.5px;width:267.7px;height:71px;background:#fff;border:2.2px solid #ff0000;box-sizing:border-box;"></div>
<div class="t" style="top:190.80px;font-size:16.6px;color:#ff0000;font-weight:bold;letter-spacing:-0.368px;left:1297.72px;transform:translateX(-50%);">Daten aus EVEBI</div>
<div class="t" style="top:208.80px;font-size:16.6px;color:#ff0000;font-weight:bold;letter-spacing:-0.62px;left:1297.19px;transform:translateX(-50%);">Stromsimulation übernehmen</div>
<div class="t" style="top:259.00px;font-size:15px;color:#000;letter-spacing:-0.779px;right:1160.38px;">Januar</div>
<div style="left:822px;top:254px;width:96px;height:28px;background:#fff;border:1px solid #e6e6e6;border-bottom:1px solid #868686;border-radius:3px;box-sizing:border-box;"></div>
<div class="t" style="top:259.00px;font-size:15px;color:#000;right:1065.70px;">0</div>
<div class="t" style="top:259.50px;font-size:15px;color:#000;letter-spacing:0.145px;left:921.40px;">kWh/mth</div>
<div class="t" style="top:259.00px;font-size:15px;color:#000;letter-spacing:-0.579px;right:866.98px;">Juli</div>
<div style="left:1115px;top:254px;width:96px;height:28px;background:#fff;border:1px solid #e6e6e6;border-bottom:1px solid #868686;border-radius:3px;box-sizing:border-box;"></div>
<div class="t" style="top:259.00px;font-size:15px;color:#000;right:772.70px;">0</div>
<div class="t" style="top:259.50px;font-size:15px;color:#000;letter-spacing:0.145px;left:1214.40px;">kWh/mth</div>
<div class="t" style="top:289.00px;font-size:15px;color:#000;letter-spacing:-0.476px;right:1160.08px;">Februar</div>
<div style="left:822px;top:284px;width:96px;height:28px;background:#fff;border:1px solid #e6e6e6;border-bottom:1px solid #868686;border-radius:3px;box-sizing:border-box;"></div>
<div class="t" style="top:289.00px;font-size:15px;color:#000;right:1065.70px;">0</div>
<div class="t" style="top:289.50px;font-size:15px;color:#000;letter-spacing:0.145px;left:921.40px;">kWh/mth</div>
<div class="t" style="top:289.00px;font-size:15px;color:#000;letter-spacing:-0.251px;right:866.65px;">August</div>
<div style="left:1115px;top:284px;width:96px;height:28px;background:#fff;border:1px solid #e6e6e6;border-bottom:1px solid #868686;border-radius:3px;box-sizing:border-box;"></div>
<div class="t" style="top:289.00px;font-size:15px;color:#000;right:772.70px;">0</div>
<div class="t" style="top:289.50px;font-size:15px;color:#000;letter-spacing:0.145px;left:1214.40px;">kWh/mth</div>
<div class="t" style="top:319.00px;font-size:15px;color:#000;letter-spacing:-0.161px;right:1159.76px;">März</div>
<div style="left:822px;top:314px;width:96px;height:28px;background:#fff;border:1px solid #e6e6e6;border-bottom:1px solid #868686;border-radius:3px;box-sizing:border-box;"></div>
<div class="t" style="top:319.00px;font-size:15px;color:#000;right:1065.70px;">0</div>
<div class="t" style="top:319.50px;font-size:15px;color:#000;letter-spacing:0.145px;left:921.40px;">kWh/mth</div>
<div class="t" style="top:319.00px;font-size:15px;color:#000;letter-spacing:-0.097px;right:866.50px;">September</div>
<div style="left:1115px;top:314px;width:96px;height:28px;background:#fff;border:1px solid #e6e6e6;border-bottom:1px solid #868686;border-radius:3px;box-sizing:border-box;"></div>
<div class="t" style="top:319.00px;font-size:15px;color:#000;right:772.70px;">0</div>
<div class="t" style="top:319.50px;font-size:15px;color:#000;letter-spacing:0.145px;left:1214.40px;">kWh/mth</div>
<div class="t" style="top:349.00px;font-size:15px;color:#000;letter-spacing:0.297px;right:1159.30px;">April</div>
<div style="left:822px;top:344px;width:96px;height:28px;background:#fff;border:1px solid #e6e6e6;border-bottom:1px solid #868686;border-radius:3px;box-sizing:border-box;"></div>
<div class="t" style="top:349.00px;font-size:15px;color:#000;right:1065.70px;">0</div>
<div class="t" style="top:349.50px;font-size:15px;color:#000;letter-spacing:0.145px;left:921.40px;">kWh/mth</div>
<div class="t" style="top:349.00px;font-size:15px;color:#000;letter-spacing:0.02px;right:866.38px;">Oktober</div>
<div style="left:1115px;top:344px;width:96px;height:28px;background:#fff;border:1px solid #e6e6e6;border-bottom:1px solid #868686;border-radius:3px;box-sizing:border-box;"></div>
<div class="t" style="top:349.00px;font-size:15px;color:#000;right:772.70px;">0</div>
<div class="t" style="top:349.50px;font-size:15px;color:#000;letter-spacing:0.145px;left:1214.40px;">kWh/mth</div>
<div class="t" style="top:379.00px;font-size:15px;color:#000;letter-spacing:0.109px;right:1159.49px;">Mai</div>
<div style="left:822px;top:374px;width:96px;height:28px;background:#fff;border:1px solid #e6e6e6;border-bottom:1px solid #868686;border-radius:3px;box-sizing:border-box;"></div>
<div class="t" style="top:379.00px;font-size:15px;color:#000;right:1065.70px;">0</div>
<div class="t" style="top:379.50px;font-size:15px;color:#000;letter-spacing:0.145px;left:921.40px;">kWh/mth</div>
<div class="t" style="top:379.00px;font-size:15px;color:#000;letter-spacing:0.037px;right:866.36px;">November</div>
<div style="left:1115px;top:374px;width:96px;height:28px;background:#fff;border:1px solid #e6e6e6;border-bottom:1px solid #868686;border-radius:3px;box-sizing:border-box;"></div>
<div class="t" style="top:379.00px;font-size:15px;color:#000;right:772.70px;">0</div>
<div class="t" style="top:379.50px;font-size:15px;color:#000;letter-spacing:0.145px;left:1214.40px;">kWh/mth</div>
<div class="t" style="top:409.00px;font-size:15px;color:#000;letter-spacing:-0.633px;right:1160.23px;">Juni</div>
<div style="left:822px;top:404px;width:96px;height:28px;background:#fff;border:1px solid #e6e6e6;border-bottom:1px solid #868686;border-radius:3px;box-sizing:border-box;"></div>
<div class="t" style="top:409.00px;font-size:15px;color:#000;right:1065.70px;">0</div>
<div class="t" style="top:409.50px;font-size:15px;color:#000;letter-spacing:0.145px;left:921.40px;">kWh/mth</div>
<div class="t" style="top:409.00px;font-size:15px;color:#000;letter-spacing:-0.15px;right:866.55px;">Dezember</div>
<div style="left:1115px;top:404px;width:96px;height:28px;background:#fff;border:1px solid #e6e6e6;border-bottom:1px solid #868686;border-radius:3px;box-sizing:border-box;"></div>
<div class="t" style="top:409.00px;font-size:15px;color:#000;right:772.70px;">0</div>
<div class="t" style="top:409.50px;font-size:15px;color:#000;letter-spacing:0.145px;left:1214.40px;">kWh/mth</div>
<div class="t" style="top:439.00px;font-size:15px;color:#000;letter-spacing:-0.24px;right:1159.84px;">spezif. Leistung</div>
<div style="left:822px;top:434px;width:96px;height:28px;background:#f0f0f0;border:1px solid #e6e6e6;border-bottom:1px solid #868686;border-radius:3px;box-sizing:border-box;"></div>
<div class="t" style="top:439.00px;font-size:15px;color:#000;font-weight:bold;right:1065.50px;">0</div>
<div class="t" style="top:439.50px;font-size:15px;color:#000;letter-spacing:-0.056px;left:921.40px;">kWh/kWpeak</div>
<div class="t" style="top:439.00px;font-size:15px;color:#000;letter-spacing:-0.14px;right:866.54px;">Ertrag gesamt</div>
<div style="left:1115px;top:434px;width:96px;height:28px;background:#f0f0f0;border:1px solid #e6e6e6;border-bottom:1px solid #868686;border-radius:3px;box-sizing:border-box;"></div>
<div class="t" style="top:439.00px;font-size:15px;color:#000;font-weight:bold;right:772.50px;">0</div>
<div class="t" style="top:439.50px;font-size:15px;color:#000;letter-spacing:-0.333px;left:1214.40px;">kWh</div>
<div style="left:702.5px;top:485.5px;width:989.5px;height:616px;border:1px solid #dcdcdc;box-sizing:border-box;"></div>
<div style="left:704px;top:497px;width:987px;height:604px;background:#fff;"></div>
<div style="left:708.5px;top:477.5px;width:124px;height:16px;background:#f9f9f9;"></div>
<div class="t" style="top:476.50px;font-size:15px;color:#000;letter-spacing:-0.186px;left:710.50px;">Monatsergebnisse</div>
<div style="left:709px;top:502px;width:25px;height:25px;background:#fdfdfd;border:1px solid #d6d6d6;border-bottom-color:#c4c4c4;border-radius:4px;box-sizing:border-box;"></div>
<svg style="left:712px;top:506px;" width="16" height="16" viewBox="0 0 16 16"><rect x="0" y="1" width="14" height="14" fill="#000"/><rect x="2" y="1" width="10" height="6" fill="#fff"/><rect x="2" y="1" width="10" height="1.5" fill="#c62828"/><rect x="4" y="10" width="6" height="5" fill="#ddd"/><rect x="5.5" y="11.5" width="3" height="3" fill="#000"/></svg>
<div style="left:709px;top:531px;width:25px;height:25px;background:#fdfdfd;border:1px solid #d6d6d6;border-bottom-color:#c4c4c4;border-radius:4px;box-sizing:border-box;"></div>
<svg style="left:711px;top:535px;" width="18" height="18" viewBox="0 0 18 18"><rect x="1.6" y="1.7" width="11" height="11.6" fill="#fdf6b8" stroke="#fbd92a" stroke-width="1"/><rect x="1" y="1.1" width="1.2" height="1.2" fill="#2fd12f"/><rect x="12" y="1.1" width="1.2" height="1.2" fill="#2fd12f"/><rect x="1" y="12.6" width="1.2" height="1.2" fill="#2fd12f"/><path d="M4 2.8 C4 0.8 10.2 0.8 10.2 2.8 Z" fill="#d8d8e0" stroke="#777" stroke-width="0.8"/><path d="M5.4 6.6 H12.2 L15 9.4 V15.4 H5.4 Z" fill="#fff" stroke="#000" stroke-width="1.2"/><path d="M7 9.3 H11.5 M7 11.3 H12.5" stroke="#000" stroke-width="1.2"/><rect x="6" y="13" width="8.6" height="2.4" fill="#000"/></svg>
<svg style="left:0;top:0" width="1977" height="1111" viewBox="0 0 1977 1111" font-family='"Liberation Sans", sans-serif'><line x1="772.4" y1="778" x2="1662" y2="778" stroke="#d8d8d8" stroke-width="1.6"/><line x1="796.6" y1="778" x2="846.2" y2="778" stroke="#f06464" stroke-width="1.7"/><line x1="820.8" y1="1038" x2="820.8" y2="1042.2" stroke="#b4b4b4" stroke-width="1.8"/><text transform="translate(822.2,1058) scale(0.84,1.09)" font-size="13.5" text-anchor="middle" fill="#000">1</text><line x1="868.6" y1="778" x2="918.2" y2="778" stroke="#f06464" stroke-width="1.7"/><line x1="892.8" y1="1038" x2="892.8" y2="1042.2" stroke="#b4b4b4" stroke-width="1.8"/><text transform="translate(894.2,1058) scale(0.84,1.09)" font-size="13.5" text-anchor="middle" fill="#000">2</text><line x1="940.6" y1="778" x2="990.2" y2="778" stroke="#f06464" stroke-width="1.7"/><line x1="964.8" y1="1038" x2="964.8" y2="1042.2" stroke="#b4b4b4" stroke-width="1.8"/><text transform="translate(966.2,1058) scale(0.84,1.09)" font-size="13.5" text-anchor="middle" fill="#000">3</text><line x1="1012.6" y1="778" x2="1062.2" y2="778" stroke="#f06464" stroke-width="1.7"/><line x1="1036.8" y1="1038" x2="1036.8" y2="1042.2" stroke="#b4b4b4" stroke-width="1.8"/><text transform="translate(1038.2,1058) scale(0.84,1.09)" font-size="13.5" text-anchor="middle" fill="#000">4</text><line x1="1084.6" y1="778" x2="1134.2" y2="778" stroke="#f06464" stroke-width="1.7"/><line x1="1108.8" y1="1038" x2="1108.8" y2="1042.2" stroke="#b4b4b4" stroke-width="1.8"/><text transform="translate(1110.2,1058) scale(0.84,1.09)" font-size="13.5" text-anchor="middle" fill="#000">5</text><line x1="1156.6" y1="778" x2="1206.2" y2="778" stroke="#f06464" stroke-width="1.7"/><line x1="1180.8" y1="1038" x2="1180.8" y2="1042.2" stroke="#b4b4b4" stroke-width="1.8"/><text transform="translate(1182.2,1058) scale(0.84,1.09)" font-size="13.5" text-anchor="middle" fill="#000">6</text><line x1="1228.6" y1="778" x2="1278.2" y2="778" stroke="#f06464" stroke-width="1.7"/><line x1="1252.8" y1="1038" x2="1252.8" y2="1042.2" stroke="#b4b4b4" stroke-width="1.8"/><text transform="translate(1254.2,1058) scale(0.84,1.09)" font-size="13.5" text-anchor="middle" fill="#000">7</text><line x1="1300.6" y1="778" x2="1350.2" y2="778" stroke="#f06464" stroke-width="1.7"/><line x1="1324.8" y1="1038" x2="1324.8" y2="1042.2" stroke="#b4b4b4" stroke-width="1.8"/><text transform="translate(1326.2,1058) scale(0.84,1.09)" font-size="13.5" text-anchor="middle" fill="#000">8</text><line x1="1372.6" y1="778" x2="1422.2" y2="778" stroke="#f06464" stroke-width="1.7"/><line x1="1396.8" y1="1038" x2="1396.8" y2="1042.2" stroke="#b4b4b4" stroke-width="1.8"/><text transform="translate(1398.2,1058) scale(0.84,1.09)" font-size="13.5" text-anchor="middle" fill="#000">9</text><line x1="1444.6" y1="778" x2="1494.2" y2="778" stroke="#f06464" stroke-width="1.7"/><line x1="1468.8" y1="1038" x2="1468.8" y2="1042.2" stroke="#b4b4b4" stroke-width="1.8"/><text transform="translate(1470.2,1058) scale(0.84,1.09)" font-size="13.5" text-anchor="middle" fill="#000">10</text><line x1="1516.6" y1="778" x2="1566.2" y2="778" stroke="#f06464" stroke-width="1.7"/><line x1="1540.8" y1="1038" x2="1540.8" y2="1042.2" stroke="#b4b4b4" stroke-width="1.8"/><text transform="translate(1542.2,1058) scale(0.84,1.09)" font-size="13.5" text-anchor="middle" fill="#000">11</text><line x1="1588.6" y1="778" x2="1638.2" y2="778" stroke="#f06464" stroke-width="1.7"/><line x1="1612.8" y1="1038" x2="1612.8" y2="1042.2" stroke="#b4b4b4" stroke-width="1.8"/><text transform="translate(1614.2,1058) scale(0.84,1.09)" font-size="13.5" text-anchor="middle" fill="#000">12</text><line x1="772.4" y1="521" x2="1662" y2="521" stroke="#5a5a5a" stroke-width="1.7"/><line x1="1662" y1="521" x2="1662" y2="1037" stroke="#5a5a5a" stroke-width="1.7"/><line x1="772.4" y1="520" x2="772.4" y2="1038" stroke="#000" stroke-width="2.2"/><line x1="771.4" y1="1037" x2="1663" y2="1037" stroke="#000" stroke-width="2.2"/><line x1="766.7" y1="778" x2="771.3" y2="778" stroke="#b4b4b4" stroke-width="1.8"/><text transform="translate(759.4,782.7) scale(0.84,1.09)" font-size="13.5" text-anchor="middle" fill="#000">0</text><text transform="translate(1218.5,1072.9) scale(0.96,1.04)" font-size="13.5" text-anchor="middle" fill="#000">Monat</text><text transform="translate(743.8,777.4) rotate(-90) scale(0.947,1.1)" font-size="13.5" text-anchor="middle" fill="#000">Ertrag in kWh</text></svg>
<div style="left:1699px;top:107px;width:278px;height:1004px;background:#f0f0f0;"></div>
<div style="left:1703px;top:107px;width:245px;height:26px;background:#fdfdfd;border:1px solid #e6e6e6;border-top:none;box-sizing:border-box;"></div>
<div class="t" style="top:113.00px;font-size:15px;color:#000;letter-spacing:-0.194px;left:1707.50px;">Ist-Zustand</div>
<svg style="left:1932px;top:117px;" width="13" height="9" viewBox="0 0 13 9"><path d="M1.5 1.5 L6.5 6.5 L11.5 1.5" stroke="#444" stroke-width="1.1" fill="none"/></svg>
<div style="left:1950px;top:110.2px;width:20.7px;height:20.8px;background:#cfe6f7;border:1.5px solid #1e62b4;border-radius:4px;box-sizing:border-box;"></div>
<div style="left:1953px;top:113.2px;width:14.7px;height:14.8px;background:#9ccb2c;"></div>
<div class="t" style="top:112.60px;font-size:15px;color:#fff;left:1960.40px;transform:translateX(-50%);">A</div>
<div style="left:0;top:0;width:1977px;height:1083px;overflow:hidden;">
<div style="left:1703px;top:133.3px;width:256px;height:960px;background:#808080;"></div>
<div style="left:1706px;top:136px;width:250.5px;height:416px;background:#fff;"></div>
<div style="left:1706px;top:558px;width:250.5px;height:128px;background:#fff;"></div>
<div style="left:1706px;top:692px;width:250.5px;height:86.60000000000002px;background:#fff;"></div>
<div style="left:1706px;top:784.2px;width:250.5px;height:101.59999999999991px;background:#fff;"></div>
<div style="left:1706px;top:891.2px;width:250.5px;height:121.79999999999995px;background:#fff;"></div>
<div style="left:1706px;top:1019px;width:250.5px;height:81px;background:#fff;"></div>
<div class="t" style="top:144.20px;font-size:22.57px;color:#161616;letter-spacing:-0.518px;left:1715.80px;">GEG 2024</div>
<div class="t" style="top:171.00px;font-size:17.0px;color:#161616;letter-spacing:-0.342px;left:1715.80px;">DIN V 18599</div>
<div style="left:1916px;top:150px;width:22px;height:22px;background:#82b41a;border-radius:50%;"></div>
<div style="left:1723.3px;top:196px;width:212.0px;height:165px;background:#fff;box-shadow:1px 1.5px 2.5px rgba(0,0,0,0.45);"></div>
<div style="left:1723.3px;top:196px;width:17.5px;height:165px;background:#d5d5d5;"></div>
<div style="left:1745px;top:196px;width:190.29999999999995px;height:165px;background:#5b9a03;overflow:hidden;"></div>
<div class="t" style="left:1732.3px;top:278.4px;font-size:11.34px;letter-spacing:-0.192px;color:#161616;transform:translate(-50%,-50%) rotate(-90deg);">Effizienzklasse</div>
<div class="t" style="top:189.60px;font-size:157px;color:#fff;left:1749.60px;transform:scaleX(0.893);transform-origin:0 0;-webkit-text-stroke:1.2px #fff;text-shadow:1px 1px 2px rgba(0,0,0,0.3);">A</div>
<div class="t" style="top:212.20px;font-size:148.5px;color:#fff;left:1846.30px;text-shadow:1px 1px 2px rgba(0,0,0,0.3);">+</div>
<div class="t" style="right:61.5px;top:337.8px;font-size:17.0px;color:#fff;text-shadow:1px 1px 2px rgba(0,0,0,0.5);letter-spacing:-0.319px;"><b>3,7</b> kWh/(m²a)</div>
<div style="left:1723.3px;top:370px;width:212.0px;height:61.2px;background:#fff;box-shadow:1px 1.5px 2.5px rgba(0,0,0,0.45);"></div>
<div style="left:1723.3px;top:370px;width:17.5px;height:61.2px;background:#d5d5d5;"></div>
<div class="t" style="left:1732.3px;top:400.6px;font-size:11.34px;letter-spacing:-0.25px;color:#161616;transform:translate(-50%,-50%) rotate(-90deg);">Q P</div>
<div style="left:1745px;top:370px;width:114px;height:19.8px;background:#d5d5d5;"></div>
<div class="t" style="top:374.20px;font-size:11.34px;color:#161616;letter-spacing:-0.215px;left:1749.80px;">91,5 kWh/(m²a)</div>
<div style="left:1745px;top:390.3px;width:62.799999999999955px;height:20.4px;background:#3f86b9;"></div>
<div class="t" style="top:394.30px;font-size:11.34px;color:#161616;letter-spacing:-0.215px;left:1749.80px;">50,3 kWh/(m²a)</div>
<div style="left:1745px;top:411.3px;width:8px;height:19.9px;background:linear-gradient(90deg,#5b9a03,#b4da3c);"></div>
<div class="t" style="top:415.00px;font-size:11.34px;color:#161616;letter-spacing:-0.214px;left:1749.80px;">6,7 kWh/(m²a)</div>
<div style="left:1723.3px;top:440px;width:212.0px;height:61.9px;background:#fff;box-shadow:1px 1.5px 2.5px rgba(0,0,0,0.45);"></div>
<div style="left:1723.3px;top:440px;width:17.5px;height:61.9px;background:#d5d5d5;"></div>
<div class="t" style="left:1732.3px;top:470.9px;font-size:11.34px;letter-spacing:-0.229px;color:#161616;transform:translate(-50%,-50%) rotate(-90deg);">H T</div>
<div style="left:1745px;top:440px;width:96.70000000000005px;height:20.2px;background:#d5d5d5;"></div>
<div class="t" style="top:444.30px;font-size:11.34px;color:#161616;letter-spacing:-0.217px;left:1749.80px;">0,41 W/(m²K)</div>
<div style="left:1745px;top:460.4px;width:96.70000000000005px;height:20.3px;background:#3f86b9;"></div>
<div class="t" style="top:464.50px;font-size:11.34px;color:#161616;letter-spacing:-0.217px;left:1749.80px;">0,41 W/(m²K)</div>
<div style="left:1745px;top:480.7px;width:53px;height:21.2px;background:linear-gradient(90deg,#5b9a03,#b4da3c);"></div>
<div class="t" style="top:485.20px;font-size:11.34px;color:#161616;letter-spacing:-0.217px;left:1749.80px;">0,22 W/(m²K)</div>
<div style="left:1723.3px;top:510.3px;width:212.0px;height:21.6px;background:#fff;box-shadow:1px 1.5px 2.5px rgba(0,0,0,0.45);"></div>
<div style="left:1723.3px;top:510.3px;width:17.5px;height:21.6px;background:#d5d5d5;"></div>
<div class="t" style="left:1732.3px;top:521.1px;font-size:11.34px;letter-spacing:-0.305px;color:#161616;transform:translate(-50%,-50%) rotate(-90deg);">EH</div>
<div style="left:1745px;top:510.3px;width:41px;height:21.6px;background:#86b71b;"></div>
<div class="t" style="top:514.60px;font-size:11.34px;color:#fff;font-weight:bold;letter-spacing:-0.242px;right:191.74px;">40</div>
<div class="t" style="top:567.60px;font-size:22.57px;color:#161616;letter-spacing:-0.442px;left:1715.80px;">Erneuerbare</div>
<div class="t" style="top:593.10px;font-size:22.57px;color:#161616;letter-spacing:-0.438px;left:1715.80px;">Energien</div>
<div style="left:1916px;top:572px;width:22px;height:22px;background:#82b41a;border-radius:50%;"></div>
<div style="left:1723.3px;top:625px;width:212.0px;height:41px;background:#fff;box-shadow:1px 1.5px 2.5px rgba(0,0,0,0.45);"></div>
<div style="left:1723.3px;top:625px;width:17.5px;height:41px;background:#d5d5d5;"></div>
<div class="t" style="left:1732.3px;top:645.5px;font-size:11.34px;letter-spacing:-0.297px;color:#161616;transform:translate(-50%,-50%) rotate(-90deg);">EE</div>
<div style="left:1745px;top:625px;width:123.59999999999991px;height:20px;background:#d5d5d5;"></div>
<div class="t" style="top:628.60px;font-size:11.34px;color:#161616;letter-spacing:-0.25px;left:1749.80px;">65 %</div>
<div style="left:1745px;top:645.5px;width:190.29999999999995px;height:20.5px;background:linear-gradient(90deg,#bf2026,#ea8a2e 28%,#ffd62e 50%,#a9d136 76%,#5b9a03);"></div>
<div class="t" style="top:648.30px;font-size:11.34px;color:#161616;letter-spacing:-0.247px;left:1749.80px;">100 %</div>
<div class="t" style="top:700.80px;font-size:22.57px;color:#161616;letter-spacing:-0.449px;left:1715.80px;">Sommerlicher</div>
<div class="t" style="top:727.30px;font-size:22.57px;color:#161616;letter-spacing:-0.487px;left:1715.80px;">Wärmeschutz</div>
<div class="t" style="top:753.90px;font-size:17.0px;color:#161616;letter-spacing:-0.334px;left:1715.80px;">DIN 4108-2</div>
<div style="left:1916px;top:706px;width:22px;height:22px;background:#82b41a;border-radius:50%;"></div>
<div class="t" style="top:792.60px;font-size:22.57px;color:#161616;letter-spacing:-0.389px;left:1715.80px;">Heizlast</div>
<div class="t" style="top:819.80px;font-size:17.0px;color:#161616;letter-spacing:-0.349px;left:1715.80px;">DIN 12831</div>
<div style="left:1723.3px;top:844.7px;width:212.0px;height:20.4px;background:#fff;box-shadow:1px 1.5px 2.5px rgba(0,0,0,0.45);"></div>
<div style="left:1723.3px;top:844.7px;width:17.5px;height:20.4px;background:#d5d5d5;"></div>
<svg style="left:1727px;top:851px;" width="10" height="10" viewBox="0 0 10 10"><ellipse cx="5" cy="5" rx="3.4" ry="2.8" fill="none" stroke="#111" stroke-width="1.1"/><path d="M1.6 5 H8.4" stroke="#111" stroke-width="1.1"/></svg>
<div class="t" style="top:848.90px;font-size:11.34px;color:#161616;letter-spacing:-0.229px;left:1749.80px;">5,1 kW</div>
<div class="t" style="top:899.50px;font-size:22.57px;color:#161616;letter-spacing:-0.428px;left:1715.80px;">Lüftungskonzept</div>
<div class="t" style="top:926.40px;font-size:17.0px;color:#161616;letter-spacing:-0.334px;left:1715.80px;">DIN 1946-6</div>
<div style="left:1916px;top:905px;width:22px;height:22px;background:#82b41a;border-radius:50%;"></div>
<div style="left:1723.3px;top:952.2px;width:212.0px;height:41.2px;background:#fff;box-shadow:1px 1.5px 2.5px rgba(0,0,0,0.45);"></div>
<div style="left:1723.3px;top:952.2px;width:17.5px;height:41.2px;background:#d5d5d5;"></div>
<div class="t" style="left:1732.3px;top:972.8px;font-size:11.34px;letter-spacing:-0.185px;color:#161616;transform:translate(-50%,-50%) rotate(-90deg);">inf min</div>
<div style="left:1745px;top:952.2px;width:94.79999999999995px;height:19.5px;background:#d5d5d5;"></div>
<div class="t" style="top:955.80px;font-size:11.34px;color:#161616;letter-spacing:-0.212px;left:1749.80px;">31 m³/h</div>
<div style="left:1745px;top:972px;width:86px;height:21.4px;background:linear-gradient(90deg,#3f86b9,#7fb3da);"></div>
<div class="t" style="top:976.00px;font-size:11.34px;color:#161616;letter-spacing:-0.212px;left:1749.80px;">29 m³/h</div>
<div class="t" style="top:1027.40px;font-size:22.57px;color:#161616;letter-spacing:-0.443px;left:1715.80px;">Beratung</div>
<div class="t" style="top:1053.60px;font-size:17.0px;color:#161616;letter-spacing:-0.342px;left:1715.80px;">DIN V 18599</div>
<div style="left:1723.3px;top:1079px;width:212.0px;height:40px;background:#fff;box-shadow:1px 1.5px 2.5px rgba(0,0,0,0.45);"></div>
<div style="left:1723.3px;top:1079px;width:17.5px;height:40px;background:#d5d5d5;"></div>
<div style="left:1745px;top:1079px;width:14.700000000000045px;height:20px;background:#5b9a03;"></div>
</div>
<svg style="left:1962px;top:136px;" width="14" height="12" viewBox="0 0 14 12"><path d="M2 9.5 L6.8 3.2 L11.6 9.5 Z" fill="#8b8b8b" stroke="#8b8b8b" stroke-width="1.5" stroke-linejoin="round"/></svg>
<div style="left:1963px;top:156px;width:11px;height:842.5px;background:#8b8b8b;border-radius:5.5px;"></div>
<svg style="left:1962px;top:1067px;" width="14" height="12" viewBox="0 0 14 12"><path d="M2 2.5 L6.8 8.8 L11.6 2.5 Z" fill="#8b8b8b" stroke="#8b8b8b" stroke-width="1.5" stroke-linejoin="round"/></svg>
<svg style="left:3px;top:68px;" width="32" height="32" viewBox="0 0 32 32"><path d="M6.6 3.7 H18.7 L25.6 10.6 V28 H6.6 Z" fill="#fff" stroke="#808080" stroke-width="1.8"/><path d="M18.2 3.7 V11.2 H25.6" fill="none" stroke="#808080" stroke-width="1.8"/></svg>
<svg style="left:49px;top:68px;" width="32" height="32" viewBox="0 0 32 32"><path d="M3 7 H11 L12.5 9.2 H25 V24 H3 Z" fill="#7a7a7a"/><path d="M6.6 12.2 H29 L25.4 25.2 H3 Z" fill="#ffd42e"/></svg>
<svg style="left:94px;top:68px;" width="32" height="32" viewBox="0 0 32 32"><rect x="3" y="3" width="26" height="26" rx="1.5" fill="#05050a"/><rect x="7" y="3" width="18" height="13.5" fill="#fff"/><rect x="7" y="3" width="18" height="4" fill="#c62828"/><rect x="12" y="20" width="13.5" height="9" fill="#d8d8d8"/><rect x="14.3" y="22.3" width="5.4" height="5.2" fill="#05050a"/><rect x="26" y="5" width="1.6" height="2" fill="#fff"/></svg>
<svg style="left:138px;top:68px;" width="32" height="32" viewBox="0 0 32 32"><rect x="13.3" y="12.3" width="14.8" height="14.7" fill="#fff" stroke="#808080" stroke-width="1.8"/><rect x="3" y="4" width="14.9" height="14.7" fill="#fff" stroke="#808080" stroke-width="1.8"/></svg>
<svg style="left:184px;top:68px;" width="32" height="32" viewBox="0 0 32 32"><path d="M3 10.6 H10.5 L12 12.6 H25 V28 H3 Z" fill="#7a7a7a"/><path d="M6.6 16 H28.9 L25.3 29 H3 Z" fill="#ffd42e"/><path d="M12.1 1.1 H17.9 V8.5 H22.9 L15.1 15.8 L7.3 8.5 H12.1 Z" fill="#3d85b8"/></svg>
<svg style="left:230px;top:68px;" width="32" height="32" viewBox="0 0 32 32"><path d="M1.9 10.4 H9.5 L11 12.4 H24 V28 H1.9 Z" fill="#7a7a7a"/><path d="M13 16.5 V8.3 H22.2 V1.6 L30 9.3 L22.2 17.2 V13 H19 V16.5 Z" fill="#be2026"/><path d="M5.5 16 H28.1 L24.5 29 H1.9 Z" fill="#ffd42e"/></svg>
<svg style="left:284px;top:68px;" width="32" height="32" viewBox="0 0 32 32"><path d="M10.08 9.68 A8.8 8.8 0 1 1 8.5 20" fill="none" stroke="#be2026" stroke-width="7.8"/><path d="M3.1 3.3 V15.9 H15.9 Z" fill="#be2026"/><circle cx="16.3" cy="15.9" r="4.9" fill="#aad331"/></svg>
<svg style="left:329px;top:68px;" width="32" height="32" viewBox="0 0 32 32"><path d="M22.02 9.68 A8.8 8.8 0 1 0 23.6 20" fill="none" stroke="#79b17a" stroke-width="7.8"/><path d="M28.8 3.3 V15.9 H16.2 Z" fill="#79b17a"/><circle cx="15.8" cy="15.9" r="4.9" fill="#aad331"/></svg>
<svg style="left:374px;top:68px;" width="32" height="32" viewBox="0 0 32 32"><path d="M3.6 27.2 L18.6 13" stroke="#000" stroke-width="2"/><polygon points="13.80,2.40 14.86,5.94 18.40,7.00 14.86,8.06 13.80,11.60 12.74,8.06 9.20,7.00 12.74,5.94" fill="#000"/><polygon points="24.70,4.40 25.83,8.27 29.70,9.40 25.83,10.53 24.70,14.40 23.57,10.53 19.70,9.40 23.57,8.27" fill="#000"/><polygon points="20.70,14.90 21.41,17.19 23.70,17.90 21.41,18.61 20.70,20.90 19.99,18.61 17.70,17.90 19.99,17.19" fill="#000"/></svg>
<svg style="left:428px;top:68px;" width="32" height="32" viewBox="0 0 32 32"><path d="M7 3.5 H19.5 L25.5 9.5 V28.5 H7 Z" fill="#fff" stroke="#000" stroke-width="2"/><path d="M18.5 3.5 V10.5 H25.5" fill="none" stroke="#000" stroke-width="1.8"/><path d="M10.5 10 H16 M10.5 14 H22 M10.5 18 H22 M10.5 22 H22 M10.5 25.5 H19" stroke="#000" stroke-width="2"/></svg>
<svg style="left:474px;top:68px;" width="32" height="32" viewBox="0 0 32 32"><rect x="1" y="3" width="8.5" height="26" fill="#cfe49a" stroke="#6f8f2a" stroke-width="1.6"/><path d="M3 8 H8 M3 12 H8 M3 16 H8 M3 20 H8" stroke="#8fae48" stroke-width="1.6" stroke-dasharray="1.5 1"/><rect x="22.5" y="3" width="8.5" height="26" fill="#cfe49a" stroke="#6f8f2a" stroke-width="1.6"/><path d="M24.5 8 H30 M24.5 12 H30 M24.5 16 H30 M24.5 20 H30" stroke="#c8763a" stroke-width="1.6" stroke-dasharray="1.5 1"/><path d="M15 12 L11 16 L15 20 Z M17 12 L21 16 L17 20 Z" fill="#6f8f2a"/></svg>
<svg style="left:520px;top:68px;" width="32" height="32" viewBox="0 0 32 32"><rect x="2.3" y="3.1" width="25.9" height="25.6" fill="#e98a2e"/><path d="M6.2 5 H24.9 V8.4 H12.3 L20.1 16.5 L11.9 24.2 H24.9 V27.6 H6.2 V24.9 L14.9 16.5 L6.2 7.7 Z" fill="#fff"/></svg>
<svg style="left:565px;top:68px;" width="32" height="32" viewBox="0 0 32 32"><rect x="2.3" y="3.1" width="25.9" height="25.6" fill="#3f86b9"/><path d="M6.2 5 H24.9 V8.4 H12.3 L20.1 16.5 L11.9 24.2 H24.9 V27.6 H6.2 V24.9 L14.9 16.5 L6.2 7.7 Z" fill="#fff"/></svg>
<svg style="left:619px;top:68px;" width="32" height="32" viewBox="0 0 32 32"><path d="M6 5 H13 V17 H6 M13 11 H17" stroke="#1f4fa8" stroke-width="1.4" fill="none"/><path d="M17 12 H25 V28 H6 M25 20 H28" stroke="#c62828" stroke-width="1.4" fill="none"/><rect x="1" y="1" width="7" height="7" fill="#000"/><path d="M2.5 6 V2.5 H6 Z" fill="#fff"/><rect x="1" y="13.5" width="7" height="7" fill="#000"/><path d="M2.5 18.5 V15.0 H6 Z" fill="#fff"/><rect x="1" y="24" width="7" height="7" fill="#000"/><path d="M2.5 29 V25.5 H6 Z" fill="#fff"/><rect x="13.5" y="8.5" width="7" height="7" fill="#000"/><path d="M15.0 13.5 V10.0 H18.5 Z" fill="#fff"/><rect x="25" y="17.5" width="7" height="7" fill="#000"/><path d="M26.5 22.5 V19.0 H30 Z" fill="#fff"/></svg>
<svg style="left:664px;top:68px;" width="32" height="32" viewBox="0 0 32 32"><rect x="5" y="3" width="4" height="26" fill="#9a9a9a"/><rect x="9" y="3" width="6" height="26" fill="#ffd42e"/><path d="M9.5 4 L14.5 7 L9.5 10 L14.5 13 L9.5 16 L14.5 19 L9.5 22 L14.5 25 L9.5 28" stroke="#e9a820" stroke-width="1.2" fill="none"/><rect x="14.5" y="3" width="1.8" height="26" fill="#c62828"/><rect x="16.3" y="3" width="11.5" height="26" fill="#e2e2e2"/><path d="M16.3 3.8 H27.8 M16.3 9 H27.8 M16.3 14.2 H27.8 M16.3 19.4 H27.8 M16.3 24.6 H27.8 M16.3 28.4 H27.8 M22 3.8 V9 M19 9 V14.2 M25 9 V14.2 M22 14.2 V19.4 M19 19.4 V24.6 M25 19.4 V24.6 M22 24.6 V28.4" stroke="#8e8e8e" stroke-width="1.6"/></svg>
<svg style="left:719px;top:68px;" width="32" height="32" viewBox="0 0 32 32"><path d="M3.5 20.5 C2 12 8 6.5 15.5 6.5 C22 6.5 25 11 25.5 14.5 L30 16.8 C25 17.5 14 19 7.5 24 Z" fill="#c62828"/></svg>
<svg style="left:764px;top:68px;" width="32" height="32" viewBox="0 0 32 32"><rect x="6.5" y="5.5" width="19" height="21" rx="1" fill="none" stroke="#c62828" stroke-width="1.3"/><path d="M16.5 9.5 C17 13 21 15 20 19.5 C19.5 21.5 18 22 18 22 C19 19 17 17.5 16.5 16 C16 18 14.5 19 15 22 C12.5 21 11.5 18.5 13 15.5 C14 13.5 16 12 16.5 9.5 Z" fill="#c62828"/></svg>
<svg style="left:810px;top:68px;" width="32" height="32" viewBox="0 0 32 32"><rect x="6.5" y="5.5" width="19" height="21" rx="1" fill="#fff" stroke="#3f86b9" stroke-width="1.5"/><path d="M13.5 10 V22.5 M13.5 17 C18 16 19 14 19 12" stroke="#0c50a5" stroke-width="1.2" fill="none"/><circle cx="13.5" cy="9.5" r="1.3" fill="#fff" stroke="#0c50a5"/><circle cx="19" cy="11" r="1.3" fill="#fff" stroke="#0c50a5"/><circle cx="13.5" cy="23" r="1.3" fill="#fff" stroke="#0c50a5"/></svg>
<svg style="left:854px;top:68px;" width="32" height="32" viewBox="0 0 32 32"><circle cx="16" cy="16.2" r="11.3" fill="none" stroke="#0c50a5" stroke-width="1.5"/><g fill="#0c50a5"><ellipse cx="19.3" cy="11.2" rx="2.3" ry="4.2" transform="rotate(28 19.3 11.2)"/><ellipse cx="10.5" cy="16.4" rx="2.3" ry="4.2" transform="rotate(100 10.5 16.4)"/><ellipse cx="18.6" cy="21.4" rx="2.3" ry="4.2" transform="rotate(-48 18.6 21.4)"/><circle cx="16" cy="16.2" r="1.5"/></g></svg>
<svg style="left:898px;top:68px;" width="32" height="32" viewBox="0 0 32 32"><g transform="translate(0,0.7)"><circle cx="16" cy="16" r="5.6" fill="#ea8a2e"/><line x1="16" y1="4.5" x2="16" y2="8.5" stroke="#f08a5a" stroke-width="1.3" transform="rotate(0 16 16)"/><line x1="16" y1="4.5" x2="16" y2="8.5" stroke="#f08a5a" stroke-width="1.3" transform="rotate(30 16 16)"/><line x1="16" y1="4.5" x2="16" y2="8.5" stroke="#f08a5a" stroke-width="1.3" transform="rotate(60 16 16)"/><line x1="16" y1="4.5" x2="16" y2="8.5" stroke="#f08a5a" stroke-width="1.3" transform="rotate(90 16 16)"/><line x1="16" y1="4.5" x2="16" y2="8.5" stroke="#f08a5a" stroke-width="1.3" transform="rotate(120 16 16)"/><line x1="16" y1="4.5" x2="16" y2="8.5" stroke="#f08a5a" stroke-width="1.3" transform="rotate(150 16 16)"/><line x1="16" y1="4.5" x2="16" y2="8.5" stroke="#f08a5a" stroke-width="1.3" transform="rotate(180 16 16)"/><line x1="16" y1="4.5" x2="16" y2="8.5" stroke="#f08a5a" stroke-width="1.3" transform="rotate(210 16 16)"/><line x1="16" y1="4.5" x2="16" y2="8.5" stroke="#f08a5a" stroke-width="1.3" transform="rotate(240 16 16)"/><line x1="16" y1="4.5" x2="16" y2="8.5" stroke="#f08a5a" stroke-width="1.3" transform="rotate(270 16 16)"/><line x1="16" y1="4.5" x2="16" y2="8.5" stroke="#f08a5a" stroke-width="1.3" transform="rotate(300 16 16)"/><line x1="16" y1="4.5" x2="16" y2="8.5" stroke="#f08a5a" stroke-width="1.3" transform="rotate(330 16 16)"/></g></svg>
<svg style="left:945px;top:68px;" width="32" height="32" viewBox="0 0 32 32"><path d="M17.5 5.5 L12.5 15.5 L16 14.5 L13.8 22" stroke="#c62828" stroke-width="2.4" fill="none"/><path d="M10.5 20 L17.5 20.5 L13.5 26.5 Z" fill="#c62828"/></svg>
<svg style="left:989px;top:68px;" width="32" height="32" viewBox="0 0 32 32"><path d="M5.5 28 V12.5 L16 3.5 L26.5 12.5 V28 Z" fill="none" stroke="#0c50a5" stroke-width="1.8"/><text x="16" y="24.5" font-size="16" text-anchor="middle" fill="#0c50a5" font-family='"Liberation Sans",sans-serif'>€</text></svg>
<svg style="left:1034px;top:68px;" width="32" height="32" viewBox="0 0 32 32"><rect x="5" y="7" width="22" height="17.5" fill="#3f86b9"/><path d="M11 9 L8 15.5 L11 15 L9 22.5" stroke="#fff" stroke-width="1.5" fill="none"/><path d="M15 9 C13.5 12 16.5 13.5 15 16 C13.5 18.5 16.5 20 15 22.5 M19 9 C17.5 12 20.5 13.5 19 16 C17.5 18.5 20.5 20 19 22.5 M23 9 C21.5 12 24.5 13.5 23 16 C21.5 18.5 24.5 20 23 22.5" stroke="#fff" stroke-width="1.1" fill="none"/></svg>
<svg style="left:1090px;top:68px;" width="32" height="32" viewBox="0 0 32 32"><rect x="5" y="3" width="19" height="24" fill="#cfe49a" stroke="#5f7420" stroke-width="1.6"/><rect x="8" y="6.5" width="13" height="3" fill="#5f7420"/><path d="M8 13 H21 M8 16.5 H21 M8 20 H14 M8 23.5 H14" stroke="#5f7420" stroke-width="1.6"/><rect x="14" y="16" width="14" height="13.5" fill="#bfdc9a" stroke="#8fb070" stroke-width="1"/><text x="21" y="27.5" font-size="12" font-weight="bold" font-style="italic" text-anchor="middle" fill="#5c9a4c" font-family='"Liberation Sans",sans-serif'>W</text></svg>
<svg style="left:1133px;top:68px;" width="32" height="32" viewBox="0 0 32 32"><rect x="6.5" y="3.5" width="19" height="24.5" fill="#fff" stroke="#000" stroke-width="1.8"/><rect x="9.5" y="7" width="5" height="3.2" fill="#5b9a03"/><rect x="9.5" y="10.2" width="7" height="3.2" fill="#9ccb2c"/><rect x="9.5" y="13.4" width="9" height="3.2" fill="#ffd42e"/><rect x="9.5" y="16.6" width="10.5" height="3.2" fill="#f0a030"/><rect x="9.5" y="19.8" width="12" height="3.2" fill="#e06a2a"/><rect x="9.5" y="23" width="13.5" height="3.2" fill="#c62828"/></svg>
<svg style="left:1180px;top:68px;" width="32" height="32" viewBox="0 0 32 32"><g fill="none" stroke-width="2.8" stroke-linejoin="round"><path d="M8.6 5.2 L2.2 10.6 V19.4 L4.4 20" stroke="#be2026"/><path d="M16.4 5 L7 12.3 V23.6 L9.8 24.2" stroke="#ffd42e"/><path d="M28.7 27.2 H11.8 V13.5 L21.4 5 L29.3 12.3" stroke="#5b9a03"/></g></svg>
<svg style="left:1234px;top:68px;" width="32" height="32" viewBox="0 0 32 32"><circle cx="16" cy="15.7" r="13" fill="#3f86b9" stroke="#cfd6de" stroke-width="1.7"/><text x="16" y="24.5" font-size="24" font-weight="bold" text-anchor="middle" fill="#fffff4" font-family='"Liberation Sans",sans-serif'>?</text></svg>
<svg style="left:1278px;top:68px;" width="32" height="32" viewBox="0 0 32 32"><rect x="6.5" y="1.5" width="19" height="29" fill="#7d5547" stroke="#000" stroke-width="1.4"/><rect x="9.5" y="5" width="13" height="8" rx="1" fill="#a9d4f5" stroke="#dfeefa" stroke-width="1"/><path d="M19 17 H23 V19" stroke="#000" stroke-width="1.3" fill="none"/></svg>
<div style="left:1760px;top:69px;width:30px;height:30px;background:#94a857;"></div>
<svg style="left:1760px;top:69px;" width="30" height="30" viewBox="0 0 30 30"><g fill="none" stroke="#d7ed9e" stroke-linejoin="round" stroke-linecap="round"><path d="M2.7 15.7 L13.3 12.8 L20 4.3 M13.3 12.8 V22.2 L2.7 26.8 M13.3 22.2 L27.4 23.2" stroke-width="1" stroke-opacity="0.75"/><path d="M2.7 26.8 V15.7 L10.3 7.8 L18.4 15.7 V26.8 Z M10.3 7.8 L20 4.3 L27.4 12.1 L18.4 15.7 M27.4 12.1 V23.2 L18.4 26.8" stroke-width="1.8"/></g></svg>
<svg style="left:1804px;top:70px;" width="30" height="28" viewBox="0 0 30 28"><path d="M4.5 13.8 H27 M13.7 5.1 L4.5 13.8 L13.7 22.5" stroke="#000" stroke-width="2.6" fill="none"/></svg>
<svg style="left:1851px;top:70px;" width="30" height="28" viewBox="0 0 30 28"><path d="M3 13.8 H25.5 M16.3 5.1 L25.5 13.8 L16.3 22.5" stroke="#5b7016" stroke-width="2" fill="none"/></svg>
<svg style="left:1894px;top:68px;" width="32" height="32" viewBox="0 0 32 32"><path d="M1 13.5 H9 V9.5 L16 16 L9 22.5 V18.5 H1 Z" fill="#000"/><rect x="18" y="1" width="11" height="30" fill="#c9cdc4"/><rect x="20" y="3.5" width="7" height="1.8" fill="#555"/><rect x="20" y="7" width="7" height="7" fill="#ffd42e"/><rect x="20" y="15.5" width="5" height="1.6" fill="#5b9a03"/><rect x="20" y="18.3" width="4" height="1.6" fill="#c62828"/><rect x="20" y="21" width="5" height="1.6" fill="#5b9a03"/><rect x="20" y="23.8" width="7" height="1.8" fill="#555"/><rect x="20" y="26.8" width="3.5" height="1.6" fill="#5b9a03"/></svg>
<svg style="left:1940px;top:69px;" width="30" height="30" viewBox="0 0 30 30"><rect width="30" height="30" fill="#ffd42e"/><rect x="0" y="3" width="30" height="2" fill="#808080"/><rect x="0" y="8.5" width="30" height="2" fill="#808080"/><rect x="0" y="14" width="30" height="2" fill="#808080"/><rect x="0" y="19.5" width="30" height="2" fill="#808080"/><rect x="0" y="25" width="30" height="2" fill="#808080"/><path d="M0 28.5 H4 L7 15 L12.5 20 L19 8 H23.5 L27.5 1.5 H30" stroke="#000" stroke-width="1.8" fill="none"/></svg>
<svg style="left:288px;top:113px;" width="32" height="32" viewBox="0 0 32 32"><path d="M2.9 9 H13.9 V4.9 L19.1 10.4 L13.9 15.5 V11.8 H2.9 Z" fill="#0c47a1"/><rect x="21.6" y="8.8" width="3.6" height="3.2" fill="#c62828"/><path d="M2.9 21.75 H14 M8.45 16.3 V27.2" stroke="#c62828" stroke-width="3.1"/><rect x="25" y="1.3" width="4.1" height="3.5" fill="#000"/><rect x="25" y="16.3" width="4.1" height="3.5" fill="#000"/><rect x="25" y="24" width="4.1" height="3.5" fill="#000"/></svg>
<svg style="left:333px;top:113px;" width="32" height="32" viewBox="0 0 32 32"><path d="M19.1 9 H8.2 V4.9 L2.9 10.4 L8.2 15.5 V11.8 H19.1 Z" fill="#0c47a1"/><rect x="21.6" y="8.8" width="3.6" height="3.2" fill="#c62828"/><rect x="2.9" y="20.2" width="11.2" height="2.9" fill="#c62828"/><rect x="25.2" y="1.3" width="4.1" height="3.5" fill="#000"/><rect x="25.2" y="16.3" width="4.1" height="3.5" fill="#000"/><rect x="25.2" y="24" width="4.1" height="3.5" fill="#000"/></svg>
<svg style="left:374px;top:113px;" width="32" height="32" viewBox="0 0 32 32"><rect x="4" y="4" width="15" height="14.8" fill="#fff" stroke="#808080" stroke-width="1.8"/><rect x="14" y="12.1" width="15.1" height="14.8" fill="#fff" stroke="#808080" stroke-width="1.8"/></svg>
<svg style="left:420px;top:114px;" width="34" height="30" viewBox="0 0 34 30"><path d="M12.5 3 H25.5 L31 8.5 V27 H12.5 Z" fill="#fff" stroke="#000" stroke-width="1.8"/><path d="M25.5 3 V8.5 H31" fill="none" stroke="#000" stroke-width="1.2"/><path d="M15.5 8.5 H21 M15.5 12.5 H22.5 M22 16.5 H28 M22 20.5 H28 M19 24 H24" stroke="#000" stroke-width="1.7"/><rect x="2.2" y="12.5" width="2.8" height="13.5" fill="#3f7fc0" stroke="#000" stroke-width="0.9"/><path d="M5 13 C8 10.8 12 10.5 15 12 L21.5 15 C23 16 22 17.8 20.5 17.4 L22.8 19 C23.8 20.3 22.6 21.6 21.2 21 C22 22.6 20.6 23.6 19.3 23 C19.4 24.8 17.6 25.2 16.3 24.7 C15 26.8 12 27 9.5 26 L5 24.8 Z" fill="#f6eaa8" stroke="#000" stroke-width="1.5"/><path d="M11 14.5 L17 17 M14.5 18.5 L20.5 19.3 M15 21.3 L20 21.8 M14.5 23.8 L18.5 23.8" stroke="#000" stroke-width="1.3"/></svg>
</body></html>
